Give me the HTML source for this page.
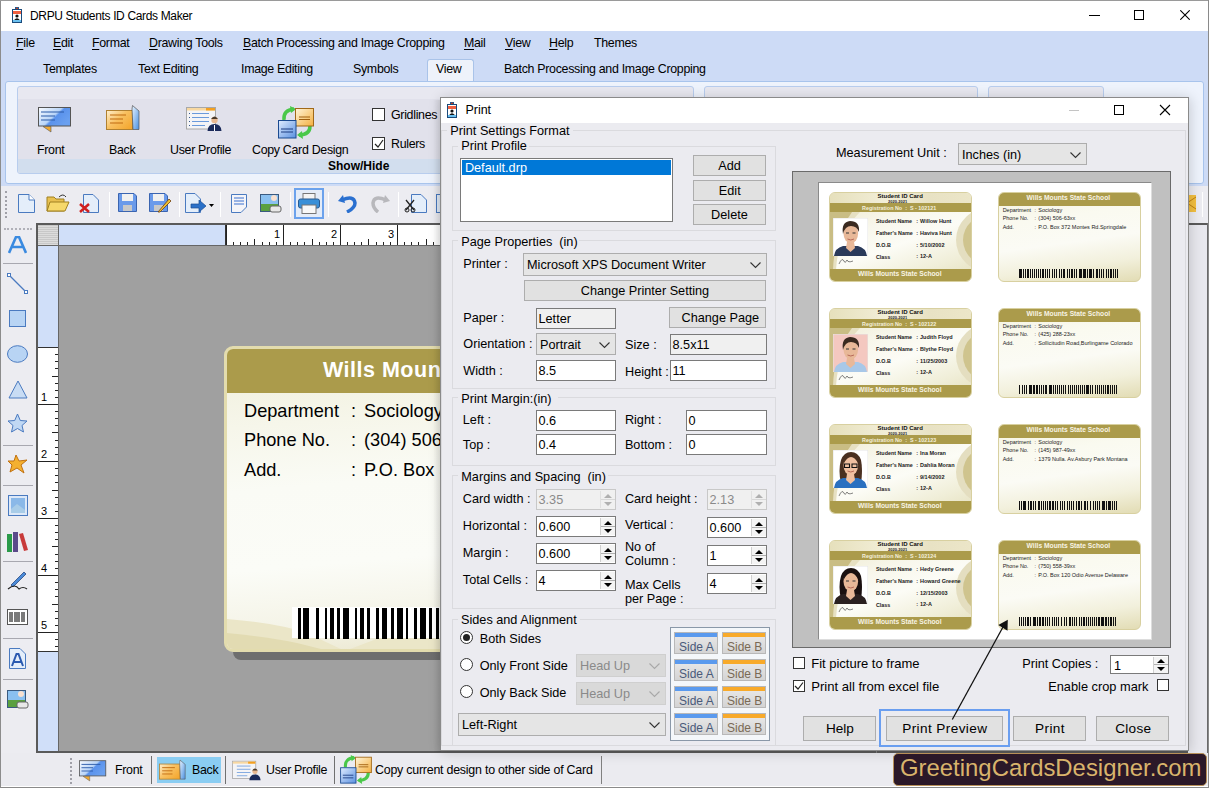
<!DOCTYPE html>
<html><head><meta charset="utf-8">
<style>
*{margin:0;padding:0;box-sizing:border-box}
html,body{width:1209px;height:788px;overflow:hidden;background:#ececf1;font-family:"Liberation Sans",sans-serif;font-size:12.4px;letter-spacing:-0.3px;color:#000}
.a{position:absolute}
.t{position:absolute;white-space:nowrap;line-height:1}
.u{text-decoration:underline;text-underline-offset:2px}
.sep{position:absolute;width:1px;background:#c8c8d0;border-right:1px solid #fff}
.hsep{position:absolute;height:1px;background:#a8a8b0}
</style></head><body>
<!-- ============ MAIN WINDOW ============ -->
<div class="a" style="left:0;top:0;width:1209px;height:31px;background:#fff"></div>
<div class="a" style="left:0;top:31px;width:1209px;height:155px;background:#cddbf6"></div>
<div class="a" style="left:0;top:0;width:1px;height:788px;background:#8c8c8c"></div>
<div class="a" style="left:0;top:0;width:1209px;height:1px;background:#9a9a9a"></div>
<!-- title -->
<svg class="a" style="left:12px;top:7px" width="10" height="16" viewBox="0 0 10 16"><rect x="3" y="0" width="4" height="3" fill="#2a5a90"/><rect x="4" y="0.8" width="2" height="1.5" fill="#c04020"/><rect x="0.5" y="2.5" width="9" height="13" fill="#fff" stroke="#1a4a7a"/><rect x="1" y="4" width="8" height="3" fill="#f06040"/><circle cx="5" cy="9" r="1.6" fill="#111"/><path d="M2.2 13 Q5 9.5 7.8 13Z" fill="#111"/><rect x="1" y="13" width="8" height="2" fill="#6ac0f0"/></svg>
<div class="t" style="left:30px;top:10px;font-size:12px;letter-spacing:-0.35px">DRPU Students ID Cards Maker</div>
<!-- window controls -->
<div class="a" style="left:1089px;top:15px;width:11px;height:1px;background:#000"></div>
<div class="a" style="left:1134px;top:10px;width:10px;height:10px;border:1px solid #000"></div>
<svg class="a" style="left:1180px;top:10px" width="10" height="10"><path d="M0.3 0.3L9.7 9.7M9.7 0.3L0.3 9.7" stroke="#000" stroke-width="1.1"/></svg>
<!-- menu -->
<div class="t" style="left:16px;top:37px"><span class="u">F</span>ile</div>
<div class="t" style="left:53px;top:37px"><span class="u">E</span>dit</div>
<div class="t" style="left:92px;top:37px"><span class="u">F</span>ormat</div>
<div class="t" style="left:149px;top:37px"><span class="u">D</span>rawing Tools</div>
<div class="t" style="left:243px;top:37px"><span class="u">B</span>atch Processing and Image Cropping</div>
<div class="t" style="left:464px;top:37px"><span class="u">M</span>ail</div>
<div class="t" style="left:505px;top:37px"><span class="u">V</span>iew</div>
<div class="t" style="left:549px;top:37px"><span class="u">H</span>elp</div>
<div class="t" style="left:594px;top:37px">Themes</div>
<!-- tabs -->
<div class="t" style="left:43px;top:63px">Templates</div>
<div class="t" style="left:138px;top:63px">Text Editing</div>
<div class="t" style="left:241px;top:63px">Image Editing</div>
<div class="t" style="left:353px;top:63px">Symbols</div>
<div class="a" style="left:427px;top:59px;width:47px;height:24px;background:#eef2fa;border:1px solid #a9c3e9;border-bottom:none;border-radius:3px 3px 0 0"></div>
<div class="t" style="left:436px;top:63px">View</div>
<div class="t" style="left:504px;top:63px">Batch Processing and Image Cropping</div>
<!-- ribbon -->
<div class="a" style="left:5px;top:81px;width:1199px;height:103px;background:#eef3fc;border:1px solid #a8c4ec;border-radius:3px"></div>
<div class="a" style="left:17px;top:86px;width:677px;height:88px;background:#e8e8f0;border:1px solid #b8cdee;border-radius:3px;overflow:hidden">
  <div class="a" style="left:0;top:12px;width:677px;height:60px;background:#e1e1eb"></div>
  <div class="a" style="left:0;top:72px;width:677px;height:15px;background:#d2deee"></div>
</div>
<div class="a" style="left:704px;top:86px;width:274px;height:88px;background:#e8e8f0;border:1px solid #b8cdee;border-radius:3px"></div>
<div class="a" style="left:988px;top:86px;width:116px;height:88px;background:#e8e8f0;border:1px solid #b8cdee;border-radius:3px"></div>
<!-- ribbon icons -->
<svg class="a" style="left:38px;top:107px" width="34" height="26" viewBox="0 0 34 26"><defs><linearGradient id="gf" x1="0" y1="0" x2="1" y2="0.6"><stop offset="0" stop-color="#fafcff"/><stop offset="0.55" stop-color="#b8d4f8"/><stop offset="0.62" stop-color="#5a92ec"/><stop offset="1" stop-color="#6aa0f0"/></linearGradient></defs><rect x="0.5" y="0.5" width="32" height="18.5" fill="url(#gf)" stroke="#555"/><path d="M3 5h23M3 9h14M3 13h14" stroke="#2a5aa8" stroke-width="1.1"/><path d="M5 19.5 L13 19.5 L13 25Z" fill="#f0a830" stroke="#555" stroke-width="0.6"/></svg>
<div class="t" style="left:37px;top:144px">Front</div>
<svg class="a" style="left:106px;top:105px" width="34" height="25" viewBox="0 0 34 25"><defs><linearGradient id="gb" x1="0" y1="0" x2="1" y2="0.8"><stop offset="0" stop-color="#fff0d0"/><stop offset="0.5" stop-color="#f8c060"/><stop offset="1" stop-color="#f4a830"/></linearGradient><linearGradient id="gb2" x1="0" y1="0" x2="1" y2="1"><stop offset="0" stop-color="#e8f4ff"/><stop offset="1" stop-color="#4a90e0"/></linearGradient></defs><rect x="0.5" y="5.5" width="26" height="19" fill="url(#gb)" stroke="#b08030"/><path d="M4 10h16M4 14h13M4 18h13" stroke="#c06a10" stroke-width="1.1"/><path d="M26 4 L26.5 0.5 L33 6 L33 24.5 L27 24.5Z" fill="url(#gb2)" stroke="#555" stroke-width="0.7"/></svg>
<div class="t" style="left:109px;top:144px">Back</div>
<svg class="a" style="left:186px;top:107px" width="36" height="24" viewBox="0 0 36 24"><rect x="0.5" y="0.5" width="29" height="21.5" fill="#f4f4f6" stroke="#a8a8a8"/><rect x="1" y="1" width="28" height="2.5" fill="#f8d8a0"/><rect x="20" y="1" width="9" height="2.5" fill="#f4a020"/><path d="M6 6.5h17M6 10.5h17M6 14.5h17M6 18.5h13" stroke="#5a90d8" stroke-width="0.9"/><path d="M3 6.5h1M3 10.5h1M3 14.5h1M3 18.5h1" stroke="#3a5a90"/><circle cx="28.5" cy="13" r="3.2" fill="#e8b890"/><path d="M25 12 Q28.5 7 32 12" fill="#4a3a2a"/><path d="M21.5 24 Q22 17 28.5 17 Q35 17 35.5 24Z" fill="#1a2a5a"/><path d="M28 18h1v6h-1Z" fill="#fff"/></svg>
<div class="t" style="left:170px;top:144px">User Profile</div>
<svg class="a" style="left:277px;top:106px" width="38" height="33" viewBox="0 0 38 33"><defs><linearGradient id="go" x1="0" y1="0" x2="1" y2="1"><stop offset="0" stop-color="#fff4d8"/><stop offset="1" stop-color="#f4b040"/></linearGradient><linearGradient id="gl" x1="0" y1="0" x2="1" y2="1"><stop offset="0" stop-color="#e0ecff"/><stop offset="1" stop-color="#5a90e0"/></linearGradient></defs><path d="M7 14 Q6 4 17 3" stroke="#4ac84a" stroke-width="3.5" fill="none"/><path d="M13 0L19 3L14 7Z" fill="#4ac84a"/><path d="M22 29 Q33 29 33 20" stroke="#4ac84a" stroke-width="3.5" fill="none"/><path d="M26 33L20 29L25 25Z" fill="#4ac84a"/><rect x="18.5" y="2.5" width="18" height="17.5" fill="url(#go)" stroke="#a06818"/><path d="M22 11h11M22 13.5h11" stroke="#a06010" stroke-width="1"/><rect x="1.5" y="14.5" width="17.5" height="17.5" fill="url(#gl)" stroke="#1a4a90"/><path d="M4 23h12M4 26h12" stroke="#1a3a80" stroke-width="1"/></svg>
<div class="t" style="left:252px;top:144px">Copy Card Design</div>
<div class="a" style="left:372px;top:108px;width:13px;height:13px;background:#fff;border:1px solid #333"></div>
<div class="t" style="left:391px;top:109px">Gridlines</div>
<div class="a" style="left:372px;top:137px;width:13px;height:13px;background:#fff;border:1px solid #333"></div>
<svg class="a" style="left:374px;top:139px" width="10" height="10"><path d="M1 5 L4 8 L9 1" stroke="#222" stroke-width="1.2" fill="none"/></svg>
<div class="t" style="left:391px;top:138px">Rulers</div>
<div class="t" style="left:328px;top:160px;font-weight:bold;font-size:12px;letter-spacing:0">Show/Hide</div>
<!-- toolbar -->
<div class="a" style="left:1px;top:184px;width:1208px;height:2px;background:#cddbf6"></div>
<div class="a" style="left:1px;top:186px;width:1208px;height:37px;background:#ececf1"></div>
<div class="a" style="left:5px;top:191px;width:1px;height:27px;border-left:2px dotted #a0a0a8"></div>
<!-- new -->
<svg class="a" style="left:18px;top:194px" width="17" height="19" viewBox="0 0 17 19"><path d="M0.5 0.5H11L16.5 6V18.5H0.5Z" fill="#e4eefa" stroke="#4a7ac0"/><path d="M11 0.5V6H16.5" fill="#fff" stroke="#4a7ac0"/></svg>
<!-- open -->
<svg class="a" style="left:46px;top:193px" width="24" height="19" viewBox="0 0 24 19"><path d="M1 4H8L10 6H18V18H1Z" fill="#e8c050" stroke="#a08020"/><path d="M4 9H23L19 18H1Z" fill="#f6d86a" stroke="#a08020"/><path d="M13 4 Q17 0 20 4" stroke="#333" fill="none"/></svg>
<!-- close -->
<svg class="a" style="left:79px;top:194px" width="21" height="19" viewBox="0 0 21 19"><path d="M4.5 0.5H14L19.5 6V18.5H4.5Z" fill="#e4eefa" stroke="#4a7ac0"/><path d="M1 10L10 18M10 10L1 18" stroke="#d02020" stroke-width="2.5"/></svg>
<div class="sep" style="left:109px;top:192px;height:25px"></div>
<!-- save -->
<svg class="a" style="left:118px;top:193px" width="19" height="19" viewBox="0 0 19 19"><path d="M0.5 0.5H16L18.5 3V18.5H0.5Z" fill="#6a9aea" stroke="#3a64b0"/><rect x="4" y="1" width="11" height="7" fill="#f0f0f0"/><rect x="5" y="12" width="9" height="6" fill="#c8c8c8"/></svg>
<!-- save as -->
<svg class="a" style="left:149px;top:193px" width="23" height="20" viewBox="0 0 23 20"><path d="M0.5 0.5H16L18.5 3V18.5H0.5Z" fill="#6a9aea" stroke="#3a64b0"/><rect x="4" y="1" width="11" height="7" fill="#f0f0f0"/><rect x="5" y="12" width="9" height="6" fill="#c8c8c8"/><path d="M9 19L20 6L22 8L11 19Z" fill="#f0c030" stroke="#704010" stroke-width="0.8"/></svg>
<div class="sep" style="left:179px;top:192px;height:25px"></div>
<!-- export -->
<svg class="a" style="left:185px;top:193px" width="30" height="20" viewBox="0 0 30 20"><path d="M0.5 0.5H10L15.5 6V19.5H0.5Z" fill="#e4eefa" stroke="#4a7ac0"/><path d="M6 11H14V7L21 13L14 19V15H6Z" fill="#2a70c8" stroke="#1a4a90" stroke-width="0.7"/><path d="M24 11H29L26.5 14Z" fill="#000"/></svg>
<div class="sep" style="left:220px;top:192px;height:25px"></div>
<svg class="a" style="left:231px;top:194px" width="16" height="19" viewBox="0 0 16 19"><path d="M0.5 0.5H15.5V13L10 18.5H0.5Z" fill="#f4f4f8" stroke="#4a7ac0"/><path d="M3 4H13M3 7H13M3 10H13" stroke="#3a70d0" stroke-width="1.2"/></svg>
<svg class="a" style="left:260px;top:194px" width="22" height="19" viewBox="0 0 22 19"><rect x="0.5" y="0.5" width="18" height="17" fill="#8ac0f0" stroke="#3a5a80"/><rect x="1" y="10" width="17" height="7" fill="#5aa040"/><circle cx="14" cy="4" r="3" fill="#f8e0d0"/><rect x="10" y="12" width="11" height="6" rx="2" fill="#e8e8e8" stroke="#666"/></svg>
<div class="sep" style="left:290px;top:192px;height:25px"></div>
<div class="a" style="left:294px;top:188px;width:30px;height:31px;border:2px solid #6ca2ec;background:#e4ecf8"></div>
<svg class="a" style="left:298px;top:193px" width="22" height="21" viewBox="0 0 22 21"><rect x="5" y="0.5" width="12" height="6" fill="#f4f4f4" stroke="#777"/><rect x="0.5" y="6" width="21" height="9" rx="2" fill="#3a90d8" stroke="#2a5a90"/><rect x="4" y="12" width="14" height="8.5" fill="#f8f8f8" stroke="#777"/></svg>
<div class="sep" style="left:328px;top:192px;height:25px"></div>
<svg class="a" style="left:338px;top:194px" width="19" height="19" viewBox="0 0 19 19"><path d="M5 1L0 7L7 9Z" fill="#2a70d0"/><path d="M4 6 Q16 1 17 9 Q17 14 9 18" stroke="#2a70d0" stroke-width="3.5" fill="none"/></svg>
<svg class="a" style="left:371px;top:194px" width="19" height="19" viewBox="0 0 19 19"><path d="M14 1L19 7L12 9Z" fill="#b8b8bc"/><path d="M15 6 Q3 1 2 9 Q2 14 7 18" stroke="#b8b8bc" stroke-width="3.5" fill="none"/></svg>
<div class="sep" style="left:398px;top:192px;height:25px"></div>
<svg class="a" style="left:404px;top:194px" width="24" height="19" viewBox="0 0 24 19"><path d="M7.5 0.5H17L22.5 6V18.5H7.5Z" fill="#e4eefa" stroke="#4a7ac0"/><path d="M2 6L10 16M10 6L2 16" stroke="#222" stroke-width="1.3"/><circle cx="3" cy="16" r="2" fill="none" stroke="#222"/><circle cx="9" cy="16" r="2" fill="none" stroke="#222"/></svg>
<svg class="a" style="left:436px;top:194px" width="6" height="19"><rect x="0.5" y="0.5" width="10" height="18" fill="#e4eefa" stroke="#4a7ac0"/></svg>
<!-- far right -->
<svg class="a" style="left:1186px;top:195px" width="10" height="17"><path d="M0 0H10V17H0Z" fill="#f4c040"/><path d="M10 2L1 8L10 14" stroke="#c08010" fill="none"/></svg>
<div class="sep" style="left:1202px;top:192px;height:25px"></div>

<!-- left toolbox -->
<div class="a" style="left:1px;top:223px;width:35px;height:529px;background:#ececf1"></div>
<div class="a" style="left:4px;top:228px;width:28px;height:1px;border-top:2px dotted #b0b0b8"></div>
<svg class="a" style="left:8px;top:236px" width="19" height="18" viewBox="0 0 19 18"><path d="M1 17L8 1H11L18 17M4.5 11H14.5" stroke="#3a8ae0" stroke-width="2.6" fill="none"/></svg>
<div class="hsep" style="left:3px;top:263px;width:30px"></div>
<svg class="a" style="left:7px;top:273px" width="21" height="21"><path d="M2 2L19 19" stroke="#4a7ac0" stroke-width="1.3"/><rect x="0.5" y="0.5" width="3" height="3" fill="#fff" stroke="#4a7ac0"/><rect x="17.5" y="17.5" width="3" height="3" fill="#fff" stroke="#4a7ac0"/></svg>
<svg class="a" style="left:9px;top:310px" width="17" height="17"><rect x="0.5" y="0.5" width="16" height="16" fill="#b8d4f4" stroke="#4a7ac0"/></svg>
<svg class="a" style="left:7px;top:345px" width="21" height="18"><ellipse cx="10.5" cy="9" rx="10" ry="8.3" fill="#b8d4f4" stroke="#4a7ac0"/></svg>
<svg class="a" style="left:8px;top:380px" width="20" height="19"><path d="M10 1L19 18H1Z" fill="#c8dcf4" stroke="#4a7ac0"/></svg>
<svg class="a" style="left:7px;top:413px" width="21" height="20"><path d="M10.5 1L13.3 7.5L20 8L15 12.5L16.5 19L10.5 15.5L4.5 19L6 12.5L1 8L7.7 7.5Z" fill="#c0d8f4" stroke="#4a7ac0"/></svg>
<div class="hsep" style="left:3px;top:445px;width:30px"></div>
<svg class="a" style="left:7px;top:454px" width="21" height="20"><path d="M9 1L12 7L20 6L14 11L17 19L10 14L3 18L5 11L1 7L7 7Z" fill="#f4b030" stroke="#c07010"/></svg>
<div class="hsep" style="left:3px;top:485px;width:30px"></div>
<svg class="a" style="left:8px;top:495px" width="20" height="21"><rect x="0.5" y="0.5" width="19" height="20" fill="#dce8f8" stroke="#4a7ac0"/><rect x="3" y="3" width="14" height="15" fill="#8ab8e8"/><path d="M3 14L9 9L17 15V18H3Z" fill="#a8cce8"/></svg>
<svg class="a" style="left:6px;top:532px" width="23" height="20"><rect x="1" y="2" width="5" height="18" fill="#2a9a4a"/><rect x="7" y="0" width="5" height="20" fill="#5a4a8a"/><path d="M13 2L17 1L22 18L18 19Z" fill="#c83a3a"/></svg>
<div class="hsep" style="left:3px;top:561px;width:30px"></div>
<svg class="a" style="left:7px;top:570px" width="21" height="21"><path d="M4 15L17 2L19 4L6 17Z" fill="#4a8ad8" stroke="#2a4a80" stroke-width="0.8"/><path d="M1 19 Q8 13 12 19 Q16 16 20 19" stroke="#222" fill="none" stroke-width="1.2"/></svg>
<svg class="a" style="left:7px;top:609px" width="21" height="16"><rect x="0.5" y="0.5" width="20" height="15" fill="#fff" stroke="#555"/><path d="M3 3V13M5 3V13M8 3V13M10 3V13M12 3V13M15 3V13M17 3V13" stroke="#222" stroke-width="1.2"/></svg>
<div class="hsep" style="left:3px;top:638px;width:30px"></div>
<svg class="a" style="left:9px;top:648px" width="17" height="21"><path d="M0.5 0.5H11L16.5 6V20.5H0.5Z" fill="#e4eefa" stroke="#4a7ac0"/><path d="M3 18L7.5 6H9.5L14 18M5 14H12" stroke="#2a5ab0" stroke-width="2" fill="none"/></svg>
<div class="hsep" style="left:3px;top:679px;width:30px"></div>
<svg class="a" style="left:7px;top:690px" width="22" height="19" viewBox="0 0 22 19"><rect x="0.5" y="0.5" width="18" height="17" fill="#8ac0f0" stroke="#3a5a80"/><rect x="1" y="10" width="17" height="7" fill="#5aa040"/><circle cx="14" cy="4" r="3" fill="#f8e0d0"/><rect x="10" y="12" width="11" height="6" rx="2" fill="#e8e8e8" stroke="#666"/></svg>

<!-- canvas -->
<div class="a" style="left:36px;top:223px;width:1152px;height:530px;background:#a0a0a0;border:2px solid #5a5a5a;border-right:none"></div>
<div class="a" style="left:1188px;top:223px;width:21px;height:530px;background:#e8e8ee;border-top:2px solid #5a5a5a"></div>
<div class="a" style="left:1207px;top:223px;width:2px;height:530px;background:#6a6a6a"></div>
<!-- rulers -->
<div class="a" style="left:38px;top:225px;width:21px;height:21px;background:repeating-linear-gradient(#c8c8c8 0 1px,#dcdcdc 1px 2px);border-right:1px solid #666;border-bottom:1px solid #666"></div>
<div class="a" style="left:59px;top:225px;width:1129px;height:21px;background:#d0dff9;border-bottom:1px solid #666"></div>
<div class="a" style="left:225px;top:225px;width:963px;height:20px;background:#fff;border-left:1px solid #333"></div>
<div class="a" style="left:38px;top:246px;width:21px;height:505px;background:#d0dff9;border-right:1px solid #666"></div>
<div class="a" style="left:38px;top:347px;width:20px;height:305px;background:#fff;border-top:1px solid #333;border-bottom:1px solid #333"></div>
<div class="a" style="left:226px;top:225px;width:1px;height:20px;background:#222"></div>
<div class="a" style="left:233px;top:242px;width:1px;height:3px;background:#222"></div>
<div class="a" style="left:240px;top:242px;width:1px;height:3px;background:#222"></div>
<div class="a" style="left:247px;top:242px;width:1px;height:3px;background:#222"></div>
<div class="a" style="left:254px;top:239px;width:1px;height:6px;background:#222"></div>
<div class="a" style="left:262px;top:242px;width:1px;height:3px;background:#222"></div>
<div class="a" style="left:269px;top:242px;width:1px;height:3px;background:#222"></div>
<div class="a" style="left:276px;top:242px;width:1px;height:3px;background:#222"></div>
<div class="a" style="left:283px;top:225px;width:1px;height:20px;background:#222"></div>
<div class="a" style="left:290px;top:242px;width:1px;height:3px;background:#222"></div>
<div class="a" style="left:297px;top:242px;width:1px;height:3px;background:#222"></div>
<div class="a" style="left:304px;top:242px;width:1px;height:3px;background:#222"></div>
<div class="a" style="left:312px;top:239px;width:1px;height:6px;background:#222"></div>
<div class="a" style="left:319px;top:242px;width:1px;height:3px;background:#222"></div>
<div class="a" style="left:326px;top:242px;width:1px;height:3px;background:#222"></div>
<div class="a" style="left:333px;top:242px;width:1px;height:3px;background:#222"></div>
<div class="t" style="left:274px;top:229px;font-size:11px">1</div>
<div class="a" style="left:340px;top:225px;width:1px;height:20px;background:#222"></div>
<div class="a" style="left:347px;top:242px;width:1px;height:3px;background:#222"></div>
<div class="a" style="left:354px;top:242px;width:1px;height:3px;background:#222"></div>
<div class="a" style="left:361px;top:242px;width:1px;height:3px;background:#222"></div>
<div class="a" style="left:368px;top:239px;width:1px;height:6px;background:#222"></div>
<div class="a" style="left:376px;top:242px;width:1px;height:3px;background:#222"></div>
<div class="a" style="left:383px;top:242px;width:1px;height:3px;background:#222"></div>
<div class="a" style="left:390px;top:242px;width:1px;height:3px;background:#222"></div>
<div class="t" style="left:331px;top:229px;font-size:11px">2</div>
<div class="a" style="left:397px;top:225px;width:1px;height:20px;background:#222"></div>
<div class="a" style="left:404px;top:242px;width:1px;height:3px;background:#222"></div>
<div class="a" style="left:411px;top:242px;width:1px;height:3px;background:#222"></div>
<div class="a" style="left:418px;top:242px;width:1px;height:3px;background:#222"></div>
<div class="a" style="left:426px;top:239px;width:1px;height:6px;background:#222"></div>
<div class="a" style="left:433px;top:242px;width:1px;height:3px;background:#222"></div>
<div class="a" style="left:440px;top:242px;width:1px;height:3px;background:#222"></div>
<div class="a" style="left:447px;top:242px;width:1px;height:3px;background:#222"></div>
<div class="t" style="left:388px;top:229px;font-size:11px">3</div>
<div class="a" style="left:454px;top:225px;width:1px;height:20px;background:#222"></div>
<div class="a" style="left:461px;top:242px;width:1px;height:3px;background:#222"></div>
<div class="a" style="left:468px;top:242px;width:1px;height:3px;background:#222"></div>
<div class="a" style="left:475px;top:242px;width:1px;height:3px;background:#222"></div>
<div class="a" style="left:482px;top:239px;width:1px;height:6px;background:#222"></div>
<div class="a" style="left:490px;top:242px;width:1px;height:3px;background:#222"></div>
<div class="a" style="left:497px;top:242px;width:1px;height:3px;background:#222"></div>
<div class="a" style="left:504px;top:242px;width:1px;height:3px;background:#222"></div>
<div class="t" style="left:445px;top:229px;font-size:11px">4</div>
<div class="a" style="left:511px;top:225px;width:1px;height:20px;background:#222"></div>
<div class="a" style="left:518px;top:242px;width:1px;height:3px;background:#222"></div>
<div class="a" style="left:525px;top:242px;width:1px;height:3px;background:#222"></div>
<div class="a" style="left:532px;top:242px;width:1px;height:3px;background:#222"></div>
<div class="a" style="left:540px;top:239px;width:1px;height:6px;background:#222"></div>
<div class="a" style="left:547px;top:242px;width:1px;height:3px;background:#222"></div>
<div class="a" style="left:554px;top:242px;width:1px;height:3px;background:#222"></div>
<div class="a" style="left:561px;top:242px;width:1px;height:3px;background:#222"></div>
<div class="t" style="left:502px;top:229px;font-size:11px">5</div>
<div class="a" style="left:568px;top:225px;width:1px;height:20px;background:#222"></div>
<div class="a" style="left:575px;top:242px;width:1px;height:3px;background:#222"></div>
<div class="a" style="left:582px;top:242px;width:1px;height:3px;background:#222"></div>
<div class="a" style="left:589px;top:242px;width:1px;height:3px;background:#222"></div>
<div class="a" style="left:596px;top:239px;width:1px;height:6px;background:#222"></div>
<div class="a" style="left:604px;top:242px;width:1px;height:3px;background:#222"></div>
<div class="a" style="left:611px;top:242px;width:1px;height:3px;background:#222"></div>
<div class="a" style="left:618px;top:242px;width:1px;height:3px;background:#222"></div>
<div class="t" style="left:559px;top:229px;font-size:11px">6</div>
<div class="a" style="left:625px;top:225px;width:1px;height:20px;background:#222"></div>
<div class="a" style="left:632px;top:242px;width:1px;height:3px;background:#222"></div>
<div class="a" style="left:639px;top:242px;width:1px;height:3px;background:#222"></div>
<div class="a" style="left:646px;top:242px;width:1px;height:3px;background:#222"></div>
<div class="a" style="left:654px;top:239px;width:1px;height:6px;background:#222"></div>
<div class="a" style="left:661px;top:242px;width:1px;height:3px;background:#222"></div>
<div class="a" style="left:668px;top:242px;width:1px;height:3px;background:#222"></div>
<div class="a" style="left:675px;top:242px;width:1px;height:3px;background:#222"></div>
<div class="t" style="left:616px;top:229px;font-size:11px">7</div>
<div class="a" style="left:682px;top:225px;width:1px;height:20px;background:#222"></div>
<div class="a" style="left:689px;top:242px;width:1px;height:3px;background:#222"></div>
<div class="a" style="left:696px;top:242px;width:1px;height:3px;background:#222"></div>
<div class="a" style="left:703px;top:242px;width:1px;height:3px;background:#222"></div>
<div class="a" style="left:710px;top:239px;width:1px;height:6px;background:#222"></div>
<div class="a" style="left:718px;top:242px;width:1px;height:3px;background:#222"></div>
<div class="a" style="left:725px;top:242px;width:1px;height:3px;background:#222"></div>
<div class="a" style="left:732px;top:242px;width:1px;height:3px;background:#222"></div>
<div class="t" style="left:673px;top:229px;font-size:11px">8</div>
<div class="a" style="left:739px;top:225px;width:1px;height:20px;background:#222"></div>
<div class="a" style="left:746px;top:242px;width:1px;height:3px;background:#222"></div>
<div class="a" style="left:753px;top:242px;width:1px;height:3px;background:#222"></div>
<div class="a" style="left:760px;top:242px;width:1px;height:3px;background:#222"></div>
<div class="a" style="left:768px;top:239px;width:1px;height:6px;background:#222"></div>
<div class="a" style="left:775px;top:242px;width:1px;height:3px;background:#222"></div>
<div class="a" style="left:782px;top:242px;width:1px;height:3px;background:#222"></div>
<div class="a" style="left:789px;top:242px;width:1px;height:3px;background:#222"></div>
<div class="t" style="left:730px;top:229px;font-size:11px">9</div>
<div class="a" style="left:796px;top:225px;width:1px;height:20px;background:#222"></div>
<div class="a" style="left:803px;top:242px;width:1px;height:3px;background:#222"></div>
<div class="a" style="left:810px;top:242px;width:1px;height:3px;background:#222"></div>
<div class="a" style="left:817px;top:242px;width:1px;height:3px;background:#222"></div>
<div class="a" style="left:824px;top:239px;width:1px;height:6px;background:#222"></div>
<div class="a" style="left:832px;top:242px;width:1px;height:3px;background:#222"></div>
<div class="a" style="left:839px;top:242px;width:1px;height:3px;background:#222"></div>
<div class="a" style="left:846px;top:242px;width:1px;height:3px;background:#222"></div>
<div class="t" style="left:787px;top:229px;font-size:11px">10</div>
<div class="a" style="left:853px;top:225px;width:1px;height:20px;background:#222"></div>
<div class="a" style="left:860px;top:242px;width:1px;height:3px;background:#222"></div>
<div class="a" style="left:867px;top:242px;width:1px;height:3px;background:#222"></div>
<div class="a" style="left:874px;top:242px;width:1px;height:3px;background:#222"></div>
<div class="a" style="left:882px;top:239px;width:1px;height:6px;background:#222"></div>
<div class="a" style="left:889px;top:242px;width:1px;height:3px;background:#222"></div>
<div class="a" style="left:896px;top:242px;width:1px;height:3px;background:#222"></div>
<div class="a" style="left:903px;top:242px;width:1px;height:3px;background:#222"></div>
<div class="t" style="left:844px;top:229px;font-size:11px">11</div>
<div class="a" style="left:910px;top:225px;width:1px;height:20px;background:#222"></div>
<div class="a" style="left:917px;top:242px;width:1px;height:3px;background:#222"></div>
<div class="a" style="left:924px;top:242px;width:1px;height:3px;background:#222"></div>
<div class="a" style="left:931px;top:242px;width:1px;height:3px;background:#222"></div>
<div class="a" style="left:938px;top:239px;width:1px;height:6px;background:#222"></div>
<div class="a" style="left:946px;top:242px;width:1px;height:3px;background:#222"></div>
<div class="a" style="left:953px;top:242px;width:1px;height:3px;background:#222"></div>
<div class="a" style="left:960px;top:242px;width:1px;height:3px;background:#222"></div>
<div class="t" style="left:901px;top:229px;font-size:11px">12</div>
<div class="a" style="left:967px;top:225px;width:1px;height:20px;background:#222"></div>
<div class="a" style="left:974px;top:242px;width:1px;height:3px;background:#222"></div>
<div class="a" style="left:981px;top:242px;width:1px;height:3px;background:#222"></div>
<div class="a" style="left:988px;top:242px;width:1px;height:3px;background:#222"></div>
<div class="a" style="left:996px;top:239px;width:1px;height:6px;background:#222"></div>
<div class="a" style="left:1003px;top:242px;width:1px;height:3px;background:#222"></div>
<div class="a" style="left:1010px;top:242px;width:1px;height:3px;background:#222"></div>
<div class="a" style="left:1017px;top:242px;width:1px;height:3px;background:#222"></div>
<div class="t" style="left:958px;top:229px;font-size:11px">13</div>
<div class="a" style="left:1024px;top:225px;width:1px;height:20px;background:#222"></div>
<div class="a" style="left:1031px;top:242px;width:1px;height:3px;background:#222"></div>
<div class="a" style="left:1038px;top:242px;width:1px;height:3px;background:#222"></div>
<div class="a" style="left:1045px;top:242px;width:1px;height:3px;background:#222"></div>
<div class="a" style="left:1052px;top:239px;width:1px;height:6px;background:#222"></div>
<div class="a" style="left:1060px;top:242px;width:1px;height:3px;background:#222"></div>
<div class="a" style="left:1067px;top:242px;width:1px;height:3px;background:#222"></div>
<div class="a" style="left:1074px;top:242px;width:1px;height:3px;background:#222"></div>
<div class="t" style="left:1015px;top:229px;font-size:11px">14</div>
<div class="a" style="left:1081px;top:225px;width:1px;height:20px;background:#222"></div>
<div class="a" style="left:1088px;top:242px;width:1px;height:3px;background:#222"></div>
<div class="a" style="left:1095px;top:242px;width:1px;height:3px;background:#222"></div>
<div class="a" style="left:1102px;top:242px;width:1px;height:3px;background:#222"></div>
<div class="a" style="left:1110px;top:239px;width:1px;height:6px;background:#222"></div>
<div class="a" style="left:1117px;top:242px;width:1px;height:3px;background:#222"></div>
<div class="a" style="left:1124px;top:242px;width:1px;height:3px;background:#222"></div>
<div class="a" style="left:1131px;top:242px;width:1px;height:3px;background:#222"></div>
<div class="t" style="left:1072px;top:229px;font-size:11px">15</div>
<div class="a" style="left:1138px;top:225px;width:1px;height:20px;background:#222"></div>
<div class="a" style="left:1145px;top:242px;width:1px;height:3px;background:#222"></div>
<div class="a" style="left:1152px;top:242px;width:1px;height:3px;background:#222"></div>
<div class="a" style="left:1159px;top:242px;width:1px;height:3px;background:#222"></div>
<div class="a" style="left:1166px;top:239px;width:1px;height:6px;background:#222"></div>
<div class="a" style="left:1174px;top:242px;width:1px;height:3px;background:#222"></div>
<div class="a" style="left:1181px;top:242px;width:1px;height:3px;background:#222"></div>
<div class="a" style="left:1188px;top:242px;width:1px;height:3px;background:#222"></div>
<div class="t" style="left:1129px;top:229px;font-size:11px">16</div>
<div class="a" style="left:55px;top:354px;width:3px;height:1px;background:#222"></div>
<div class="a" style="left:55px;top:361px;width:3px;height:1px;background:#222"></div>
<div class="a" style="left:55px;top:368px;width:3px;height:1px;background:#222"></div>
<div class="a" style="left:52px;top:376px;width:6px;height:1px;background:#222"></div>
<div class="a" style="left:55px;top:383px;width:3px;height:1px;background:#222"></div>
<div class="a" style="left:55px;top:390px;width:3px;height:1px;background:#222"></div>
<div class="a" style="left:55px;top:397px;width:3px;height:1px;background:#222"></div>
<div class="a" style="left:38px;top:404px;width:20px;height:1px;background:#222"></div>
<div class="a" style="left:55px;top:411px;width:3px;height:1px;background:#222"></div>
<div class="a" style="left:55px;top:418px;width:3px;height:1px;background:#222"></div>
<div class="a" style="left:55px;top:425px;width:3px;height:1px;background:#222"></div>
<div class="a" style="left:52px;top:432px;width:6px;height:1px;background:#222"></div>
<div class="a" style="left:55px;top:440px;width:3px;height:1px;background:#222"></div>
<div class="a" style="left:55px;top:447px;width:3px;height:1px;background:#222"></div>
<div class="a" style="left:55px;top:454px;width:3px;height:1px;background:#222"></div>
<div class="t" style="left:41px;top:392px;font-size:11px">1</div>
<div class="a" style="left:38px;top:461px;width:20px;height:1px;background:#222"></div>
<div class="a" style="left:55px;top:468px;width:3px;height:1px;background:#222"></div>
<div class="a" style="left:55px;top:475px;width:3px;height:1px;background:#222"></div>
<div class="a" style="left:55px;top:482px;width:3px;height:1px;background:#222"></div>
<div class="a" style="left:52px;top:490px;width:6px;height:1px;background:#222"></div>
<div class="a" style="left:55px;top:497px;width:3px;height:1px;background:#222"></div>
<div class="a" style="left:55px;top:504px;width:3px;height:1px;background:#222"></div>
<div class="a" style="left:55px;top:511px;width:3px;height:1px;background:#222"></div>
<div class="t" style="left:41px;top:449px;font-size:11px">2</div>
<div class="a" style="left:38px;top:518px;width:20px;height:1px;background:#222"></div>
<div class="a" style="left:55px;top:525px;width:3px;height:1px;background:#222"></div>
<div class="a" style="left:55px;top:532px;width:3px;height:1px;background:#222"></div>
<div class="a" style="left:55px;top:539px;width:3px;height:1px;background:#222"></div>
<div class="a" style="left:52px;top:546px;width:6px;height:1px;background:#222"></div>
<div class="a" style="left:55px;top:554px;width:3px;height:1px;background:#222"></div>
<div class="a" style="left:55px;top:561px;width:3px;height:1px;background:#222"></div>
<div class="a" style="left:55px;top:568px;width:3px;height:1px;background:#222"></div>
<div class="t" style="left:41px;top:506px;font-size:11px">3</div>
<div class="a" style="left:38px;top:575px;width:20px;height:1px;background:#222"></div>
<div class="a" style="left:55px;top:582px;width:3px;height:1px;background:#222"></div>
<div class="a" style="left:55px;top:589px;width:3px;height:1px;background:#222"></div>
<div class="a" style="left:55px;top:596px;width:3px;height:1px;background:#222"></div>
<div class="a" style="left:52px;top:604px;width:6px;height:1px;background:#222"></div>
<div class="a" style="left:55px;top:611px;width:3px;height:1px;background:#222"></div>
<div class="a" style="left:55px;top:618px;width:3px;height:1px;background:#222"></div>
<div class="a" style="left:55px;top:625px;width:3px;height:1px;background:#222"></div>
<div class="t" style="left:41px;top:563px;font-size:11px">4</div>
<div class="a" style="left:38px;top:632px;width:20px;height:1px;background:#222"></div>
<div class="a" style="left:55px;top:639px;width:3px;height:1px;background:#222"></div>
<div class="a" style="left:55px;top:646px;width:3px;height:1px;background:#222"></div>
<div class="t" style="left:41px;top:620px;font-size:11px">5</div>
<!-- card on canvas -->
<div class="a" style="left:233px;top:358px;width:220px;height:302px;background:#6e6e6e;border-radius:8px"></div>
<div class="a" style="left:224px;top:346px;width:230px;height:306px;background:linear-gradient(175deg,#efeedb 0%,#f6f6ea 25%,#fafbf5 45%,#fbfcf7 70%,#f4f3e6 90%,#ece8d0 100%);border:3px solid #e3dcae;border-radius:9px;overflow:hidden">
  <div class="a" style="left:0;top:0;width:230px;height:44px;background:#ab9b4b"></div>
  <svg class="a" style="left:0;top:240px" width="230" height="66"><path d="M0 30 Q50 34 80 44 L118 62 L160 46 Q200 36 230 34 V66 H0Z" fill="#ebe6c8"/><path d="M0 44 Q40 48 70 54 L118 66 L0 66Z" fill="#e2dbb2"/></svg>
  <div class="a" style="left:65px;top:258px;width:170px;height:31px;background:#fff"></div>
</div>
<div class="t" style="left:323px;top:360px;font-size:21.5px;font-weight:bold;color:#fff;letter-spacing:0.5px">Wills Mounts State School</div>
<div class="t" style="left:244px;top:402px;font-size:18.2px;letter-spacing:0">Department</div>
<div class="t" style="left:351px;top:402px;font-size:18.2px;letter-spacing:0">:</div>
<div class="t" style="left:364px;top:402px;font-size:18.2px;letter-spacing:0">Sociology</div>
<div class="t" style="left:244px;top:431px;font-size:18.2px;letter-spacing:0">Phone No.</div>
<div class="t" style="left:351px;top:431px;font-size:18.2px;letter-spacing:0">:</div>
<div class="t" style="left:364px;top:431px;font-size:18.2px;letter-spacing:0">(304) 506-63xx</div>
<div class="t" style="left:244px;top:461px;font-size:18.2px;letter-spacing:0">Add.</div>
<div class="t" style="left:351px;top:461px;font-size:18.2px;letter-spacing:0">:</div>
<div class="t" style="left:364px;top:461px;font-size:18.2px;letter-spacing:0">P.O. Box 372</div>
<div class="a" style="left:298px;top:608px;width:2.5px;height:31px;background:#000"></div>
<div class="a" style="left:303.3px;top:608px;width:6px;height:31px;background:#000"></div>
<div class="a" style="left:316px;top:608px;width:2.6px;height:31px;background:#000"></div>
<div class="a" style="left:325px;top:608px;width:2.4px;height:31px;background:#000"></div>
<div class="a" style="left:330.3px;top:608px;width:3.4px;height:31px;background:#000"></div>
<div class="a" style="left:337px;top:608px;width:2.5px;height:31px;background:#000"></div>
<div class="a" style="left:342.5px;top:608px;width:6px;height:31px;background:#000"></div>
<div class="a" style="left:354.7px;top:608px;width:2.6px;height:31px;background:#000"></div>
<div class="a" style="left:360.1px;top:608px;width:3.5px;height:31px;background:#000"></div>
<div class="a" style="left:366.5px;top:608px;width:3px;height:31px;background:#000"></div>
<div class="a" style="left:376px;top:608px;width:2.6px;height:31px;background:#000"></div>
<div class="a" style="left:381.6px;top:608px;width:5.8px;height:31px;background:#000"></div>
<div class="a" style="left:390.7px;top:608px;width:3px;height:31px;background:#000"></div>
<div class="a" style="left:396.5px;top:608px;width:6px;height:31px;background:#000"></div>
<div class="a" style="left:405.6px;top:608px;width:2.6px;height:31px;background:#000"></div>
<div class="a" style="left:414.4px;top:608px;width:3px;height:31px;background:#000"></div>
<div class="a" style="left:420.2px;top:608px;width:6.3px;height:31px;background:#000"></div>
<div class="a" style="left:429.3px;top:608px;width:2.6px;height:31px;background:#000"></div>
<div class="a" style="left:435.6px;top:608px;width:3px;height:31px;background:#000"></div>
<!-- bottom bar -->
<div class="a" style="left:1px;top:753px;width:1208px;height:35px;background:#ebebf0;border-bottom:1px solid #8a8a8a"></div>
<div class="a" style="left:1px;top:786px;width:1208px;height:1px;background:#fff"></div>
<div class="a" style="left:70px;top:758px;width:1px;height:26px;border-left:2px dotted #a0a0a8"></div>
<svg class="a" style="left:79px;top:760px" width="28" height="22" viewBox="0 0 34 26"><rect x="0.5" y="0.5" width="32" height="18.5" fill="url(#gf)" stroke="#555"/><path d="M3 5h23M3 9h14M3 13h14" stroke="#2a5aa8" stroke-width="1.1"/><path d="M5 19.5 L13 19.5 L13 25Z" fill="#f0a830" stroke="#555" stroke-width="0.6"/></svg>
<div class="t" style="left:115px;top:764px">Front</div>
<div class="a" style="left:151px;top:756px;width:1px;height:28px;background:#707070"></div>
<div class="a" style="left:157px;top:757px;width:64px;height:26px;background:#8acdf2"></div>
<svg class="a" style="left:159px;top:759px" width="27" height="22" viewBox="0 0 34 26"><rect x="0.5" y="5.5" width="26" height="19" fill="url(#gb)" stroke="#b08030"/><path d="M4 10h16M4 14h13M4 18h13" stroke="#c06a10" stroke-width="1.1"/><path d="M26 4 L26.5 0.5 L33 6 L33 24.5 L27 24.5Z" fill="url(#gb2)" stroke="#555" stroke-width="0.7"/></svg>
<div class="t" style="left:192px;top:764px">Back</div>
<div class="a" style="left:225px;top:756px;width:1px;height:28px;background:#707070"></div>
<svg class="a" style="left:232px;top:760px" width="29" height="21" viewBox="0 0 36 24"><rect x="0.5" y="0.5" width="29" height="21.5" fill="#f4f4f6" stroke="#a8a8a8"/><rect x="1" y="1" width="28" height="2.5" fill="#f8d8a0"/><rect x="20" y="1" width="9" height="2.5" fill="#f4a020"/><path d="M6 6.5h17M6 10.5h17M6 14.5h17M6 18.5h13" stroke="#5a90d8" stroke-width="0.9"/><circle cx="28.5" cy="13" r="3.2" fill="#e8b890"/><path d="M25 12 Q28.5 7 32 12" fill="#4a3a2a"/><path d="M21.5 24 Q22 17 28.5 17 Q35 17 35.5 24Z" fill="#1a2a5a"/></svg>
<div class="t" style="left:266px;top:764px">User Profile</div>
<div class="a" style="left:334px;top:756px;width:1px;height:28px;background:#707070"></div>
<svg class="a" style="left:339px;top:755px" width="34" height="29" viewBox="0 0 38 33"><path d="M7 14 Q6 4 17 3" stroke="#4ac84a" stroke-width="3.5" fill="none"/><path d="M13 0L19 3L14 7Z" fill="#4ac84a"/><path d="M22 29 Q33 29 33 20" stroke="#4ac84a" stroke-width="3.5" fill="none"/><path d="M26 33L20 29L25 25Z" fill="#4ac84a"/><rect x="18.5" y="2.5" width="18" height="17.5" fill="url(#go)" stroke="#a06818"/><path d="M22 11h11M22 13.5h11" stroke="#a06010" stroke-width="1"/><rect x="1.5" y="14.5" width="17.5" height="17.5" fill="url(#gl)" stroke="#1a4a90"/><path d="M4 23h12M4 26h12" stroke="#1a3a80" stroke-width="1"/></svg>
<div class="t" style="left:375px;top:764px;letter-spacing:-0.22px">Copy current design to other side of Card</div>
<div class="a" style="left:601px;top:756px;width:1px;height:28px;background:#808080"></div>
<div class="a" style="left:876px;top:750px;width:1px;height:3px;background:#808080"></div>

<!-- ============ DIALOG ============ -->
<div class="a" style="left:433px;top:100px;width:8px;height:652px;background:linear-gradient(90deg,rgba(0,0,0,0),rgba(0,0,0,0.08))"></div>
<div class="a" style="left:440px;top:97px;width:749px;height:654px;background:#ebebf0;border:1px solid #8a8a8a;box-shadow:1px 1px 12px rgba(0,0,0,0.18)"></div>
<div class="a" style="left:441px;top:98px;width:747px;height:25px;background:#fff"></div>
<svg class="a" style="left:447px;top:102px" width="10" height="16" viewBox="0 0 10 16"><rect x="3" y="0" width="4" height="3" fill="#2a5a90"/><rect x="4" y="0.8" width="2" height="1.5" fill="#c04020"/><rect x="0.5" y="2.5" width="9" height="13" fill="#fff" stroke="#1a4a7a"/><rect x="1" y="4" width="8" height="3" fill="#f06040"/><circle cx="5" cy="9" r="1.6" fill="#111"/><path d="M2.2 13 Q5 9.5 7.8 13Z" fill="#111"/><rect x="1" y="13" width="8" height="2" fill="#6ac0f0"/></svg>
<div class="t" style="left:465.4px;top:103.8px;font-size:12.5px;letter-spacing:0;color:#000;">Print</div>
<div class="a" style="left:1069px;top:110px;width:10px;height:1px;background:#c4c4c4"></div>
<div class="a" style="left:1114px;top:105px;width:10px;height:10px;border:1px solid #000"></div>
<svg class="a" style="left:1159px;top:104px" width="12" height="12"><path d="M1 1L11 11M11 1L1 11" stroke="#000" stroke-width="1.1"/></svg>
<div class="a" style="left:441px;top:130px;width:745px;height:616px;border:1px solid #dadade"></div>
<div class="a" style="left:447.3px;top:128px;width:125.4px;height:5px;background:#ebebf0"></div>
<div class="t" style="left:450.3px;top:125.3px;font-size:12.7px;letter-spacing:0;color:#000;">Print Settings Format</div>
<div class="a" style="left:452px;top:146px;width:324px;height:85px;border:1px solid #dadade"></div>
<div class="a" style="left:458.3px;top:144px;width:71.2px;height:5px;background:#ebebf0"></div>
<div class="t" style="left:461.3px;top:140.1px;font-size:12.7px;letter-spacing:0;color:#000;">Print Profile</div>
<div class="a" style="left:460px;top:158px;width:213px;height:64px;background:#fff;border:1px solid #7a7a7a;"></div>
<div class="a" style="left:462px;top:160px;width:209px;height:15px;background:#0078d7"></div>
<div class="t" style="left:464.9px;top:162.3px;font-size:12.7px;letter-spacing:0;color:#fff;">Default.drp</div>
<div class="a" style="left:693px;top:155px;width:73px;height:21px;background:#e1e1e1;border:1px solid #adadad;"></div>
<div class="t" style="left:718.2px;top:160.0px;font-size:12.7px;letter-spacing:0px;color:#000">Add</div>
<div class="a" style="left:693px;top:180px;width:73px;height:21px;background:#e1e1e1;border:1px solid #adadad;"></div>
<div class="t" style="left:718.8px;top:185.0px;font-size:12.7px;letter-spacing:0px;color:#000">Edit</div>
<div class="a" style="left:693px;top:204px;width:73px;height:21px;background:#e1e1e1;border:1px solid #adadad;"></div>
<div class="t" style="left:711.1px;top:209.0px;font-size:12.7px;letter-spacing:0px;color:#000">Delete</div>
<div class="a" style="left:452px;top:240px;width:324px;height:149px;border:1px solid #dadade"></div>
<div class="a" style="left:458.3px;top:238px;width:120.7px;height:5px;background:#ebebf0"></div>
<div class="t" style="left:461.3px;top:236.1px;font-size:12.7px;letter-spacing:0;color:#000;">Page Properties&nbsp;&nbsp;(in)</div>
<div class="t" style="left:463.3px;top:258.1px;font-size:12.7px;letter-spacing:0;color:#000;">Printer :</div>
<div class="a" style="left:523px;top:253px;width:244px;height:23px;background:#e5e5e5;border:1px solid #adadad;"></div>
<div class="t" style="left:527.0px;top:259.0px;font-size:12.7px;letter-spacing:0;color:#000;">Microsoft XPS Document Writer</div>
<svg class="a" style="left:750px;top:262px" width="11" height="7"><path d="M0.5 0.5L5.5 5.5L10.5 0.5" stroke="#333" fill="none" stroke-width="1.1"/></svg>
<div class="a" style="left:524px;top:280px;width:242px;height:21px;background:#e1e1e1;border:1px solid #adadad;"></div>
<div class="t" style="left:580.8px;top:285.0px;font-size:12.7px;letter-spacing:0px;color:#000">Change Printer Setting</div>
<div class="t" style="left:463.3px;top:312.3px;font-size:12.7px;letter-spacing:0;color:#000;">Paper :</div>
<div class="a" style="left:536px;top:308px;width:80px;height:21px;background:#f0f0f0;border:1px solid #7a7a7a;"></div>
<div class="t" style="left:538.5px;top:313.0px;font-size:12.7px;letter-spacing:0;color:#000;">Letter</div>
<div class="a" style="left:669px;top:307px;width:97px;height:21px;background:#e1e1e1;border:1px solid #adadad;"></div>
<div class="t" style="left:681.5px;top:312.0px;font-size:12.7px;letter-spacing:0px;color:#000">Change Page</div>
<div class="t" style="left:463.3px;top:338.3px;font-size:12.7px;letter-spacing:0;color:#000;">Orientation :</div>
<div class="a" style="left:536px;top:333px;width:80px;height:22px;background:#e5e5e5;border:1px solid #adadad;"></div>
<div class="t" style="left:540.0px;top:338.5px;font-size:12.7px;letter-spacing:0;color:#000;">Portrait</div>
<svg class="a" style="left:599px;top:342px" width="11" height="7"><path d="M0.5 0.5L5.5 5.5L10.5 0.5" stroke="#333" fill="none" stroke-width="1.1"/></svg>
<div class="t" style="left:625.0px;top:339.1px;font-size:12.7px;letter-spacing:0;color:#000;">Size :</div>
<div class="a" style="left:670px;top:334px;width:97px;height:21px;background:#f0f0f0;border:1px solid #7a7a7a;"></div>
<div class="t" style="left:672.5px;top:339.0px;font-size:12.7px;letter-spacing:0;color:#000;">8.5x11</div>
<div class="t" style="left:463.3px;top:364.7px;font-size:12.7px;letter-spacing:0;color:#000;">Width :</div>
<div class="a" style="left:536px;top:360px;width:80px;height:21px;background:#fff;border:1px solid #7a7a7a;"></div>
<div class="t" style="left:538.5px;top:365.0px;font-size:12.7px;letter-spacing:0;color:#000;">8.5</div>
<div class="t" style="left:625.0px;top:365.5px;font-size:12.7px;letter-spacing:0;color:#000;">Height :</div>
<div class="a" style="left:670px;top:360px;width:97px;height:21px;background:#fff;border:1px solid #7a7a7a;"></div>
<div class="t" style="left:672.5px;top:365.0px;font-size:12.7px;letter-spacing:0;color:#000;">11</div>
<div class="a" style="left:452px;top:397px;width:324px;height:69px;border:1px solid #dadade"></div>
<div class="a" style="left:458.3px;top:395px;width:100px;height:5px;background:#ebebf0"></div>
<div class="t" style="left:461.3px;top:392.9px;font-size:12.7px;letter-spacing:0;color:#000;">Print Margin:(in)</div>
<div class="t" style="left:462.8px;top:413.5px;font-size:12.7px;letter-spacing:0;color:#000;">Left :</div>
<div class="a" style="left:536px;top:410px;width:80px;height:21px;background:#fff;border:1px solid #7a7a7a;"></div>
<div class="t" style="left:538.5px;top:415.0px;font-size:12.7px;letter-spacing:0;color:#000;">0.6</div>
<div class="t" style="left:624.9px;top:413.5px;font-size:12.7px;letter-spacing:0;color:#000;">Right :</div>
<div class="a" style="left:686px;top:410px;width:81px;height:21px;background:#fff;border:1px solid #7a7a7a;"></div>
<div class="t" style="left:688.5px;top:415.0px;font-size:12.7px;letter-spacing:0;color:#000;">0</div>
<div class="t" style="left:462.8px;top:439.4px;font-size:12.7px;letter-spacing:0;color:#000;">Top :</div>
<div class="a" style="left:536px;top:434px;width:80px;height:21px;background:#fff;border:1px solid #7a7a7a;"></div>
<div class="t" style="left:538.5px;top:439.0px;font-size:12.7px;letter-spacing:0;color:#000;">0.4</div>
<div class="t" style="left:624.9px;top:439.4px;font-size:12.7px;letter-spacing:0;color:#000;">Bottom :</div>
<div class="a" style="left:686px;top:434px;width:81px;height:21px;background:#fff;border:1px solid #7a7a7a;"></div>
<div class="t" style="left:688.5px;top:439.0px;font-size:12.7px;letter-spacing:0;color:#000;">0</div>
<div class="a" style="left:452px;top:475px;width:324px;height:134px;border:1px solid #dadade"></div>
<div class="a" style="left:458.3px;top:473px;width:150px;height:5px;background:#ebebf0"></div>
<div class="t" style="left:461.3px;top:470.9px;font-size:12.7px;letter-spacing:0;color:#000;">Margins and Spacing&nbsp;&nbsp;(in)</div>
<div class="t" style="left:462.8px;top:492.7px;font-size:12.7px;letter-spacing:0;color:#000;">Card width :</div>
<div class="a" style="left:536px;top:489px;width:80px;height:21px;background:#f0f0f0;border:1px solid #c8c8c8;"></div>
<div class="t" style="left:538.5px;top:494.0px;font-size:12.7px;letter-spacing:0;color:#8a8a8a;">3.35</div>
<div class="a" style="left:600px;top:491px;width:15px;height:17px;background:#f0f0f0;border-left:1px solid #e0e0e0"></div>
<div class="a" style="left:601px;top:499px;width:14px;height:1px;background:#d8d8d8"></div>
<svg class="a" style="left:604px;top:494px" width="8" height="4"><path d="M0 4L4 0L8 4Z" fill="#b0b0b0"/></svg>
<svg class="a" style="left:604px;top:502px" width="8" height="4"><path d="M0 0L4 4L8 0Z" fill="#b0b0b0"/></svg>
<div class="t" style="left:624.9px;top:492.7px;font-size:12.7px;letter-spacing:0;color:#000;">Card height :</div>
<div class="a" style="left:707px;top:489px;width:60px;height:21px;background:#f0f0f0;border:1px solid #c8c8c8;"></div>
<div class="t" style="left:709.5px;top:494.0px;font-size:12.7px;letter-spacing:0;color:#8a8a8a;">2.13</div>
<div class="a" style="left:751px;top:491px;width:15px;height:17px;background:#f0f0f0;border-left:1px solid #e0e0e0"></div>
<div class="a" style="left:752px;top:499px;width:14px;height:1px;background:#d8d8d8"></div>
<svg class="a" style="left:755px;top:494px" width="8" height="4"><path d="M0 4L4 0L8 4Z" fill="#b0b0b0"/></svg>
<svg class="a" style="left:755px;top:502px" width="8" height="4"><path d="M0 0L4 4L8 0Z" fill="#b0b0b0"/></svg>
<div class="t" style="left:462.8px;top:520.2px;font-size:12.7px;letter-spacing:0;color:#000;">Horizontal :</div>
<div class="a" style="left:536px;top:516px;width:80px;height:21px;background:#fff;border:1px solid #7a7a7a;"></div>
<div class="t" style="left:538.5px;top:521.0px;font-size:12.7px;letter-spacing:0;color:#000;">0.600</div>
<div class="a" style="left:600px;top:518px;width:15px;height:17px;background:#f4f4f4;border-left:1px solid #d0d0d0"></div>
<div class="a" style="left:601px;top:526px;width:14px;height:1px;background:#b0b0b0"></div>
<svg class="a" style="left:604px;top:521px" width="8" height="4"><path d="M0 4L4 0L8 4Z" fill="#000"/></svg>
<svg class="a" style="left:604px;top:529px" width="8" height="4"><path d="M0 0L4 4L8 0Z" fill="#000"/></svg>
<div class="t" style="left:624.9px;top:518.6px;font-size:12.7px;letter-spacing:0;color:#000;">Vertical :</div>
<div class="a" style="left:707px;top:517px;width:60px;height:21px;background:#fff;border:1px solid #7a7a7a;"></div>
<div class="t" style="left:709.5px;top:522.0px;font-size:12.7px;letter-spacing:0;color:#000;">0.600</div>
<div class="a" style="left:751px;top:519px;width:15px;height:17px;background:#f4f4f4;border-left:1px solid #d0d0d0"></div>
<div class="a" style="left:752px;top:527px;width:14px;height:1px;background:#b0b0b0"></div>
<svg class="a" style="left:755px;top:522px" width="8" height="4"><path d="M0 4L4 0L8 4Z" fill="#000"/></svg>
<svg class="a" style="left:755px;top:530px" width="8" height="4"><path d="M0 0L4 4L8 0Z" fill="#000"/></svg>
<div class="t" style="left:462.8px;top:546.9px;font-size:12.7px;letter-spacing:0;color:#000;">Margin :</div>
<div class="a" style="left:536px;top:543px;width:80px;height:21px;background:#fff;border:1px solid #7a7a7a;"></div>
<div class="t" style="left:538.5px;top:548.0px;font-size:12.7px;letter-spacing:0;color:#000;">0.600</div>
<div class="a" style="left:600px;top:545px;width:15px;height:17px;background:#f4f4f4;border-left:1px solid #d0d0d0"></div>
<div class="a" style="left:601px;top:553px;width:14px;height:1px;background:#b0b0b0"></div>
<svg class="a" style="left:604px;top:548px" width="8" height="4"><path d="M0 4L4 0L8 4Z" fill="#000"/></svg>
<svg class="a" style="left:604px;top:556px" width="8" height="4"><path d="M0 0L4 4L8 0Z" fill="#000"/></svg>
<div class="t" style="left:624.9px;top:540.9px;font-size:12.7px;letter-spacing:0;color:#000;">No of</div>
<div class="t" style="left:624.9px;top:555.2px;font-size:12.7px;letter-spacing:0;color:#000;">Column :</div>
<div class="a" style="left:707px;top:545px;width:60px;height:21px;background:#fff;border:1px solid #7a7a7a;"></div>
<div class="t" style="left:709.5px;top:550.0px;font-size:12.7px;letter-spacing:0;color:#000;">1</div>
<div class="a" style="left:751px;top:547px;width:15px;height:17px;background:#f4f4f4;border-left:1px solid #d0d0d0"></div>
<div class="a" style="left:752px;top:555px;width:14px;height:1px;background:#b0b0b0"></div>
<svg class="a" style="left:755px;top:550px" width="8" height="4"><path d="M0 4L4 0L8 4Z" fill="#000"/></svg>
<svg class="a" style="left:755px;top:558px" width="8" height="4"><path d="M0 0L4 4L8 0Z" fill="#000"/></svg>
<div class="t" style="left:462.8px;top:573.5px;font-size:12.7px;letter-spacing:0;color:#000;">Total Cells :</div>
<div class="a" style="left:536px;top:570px;width:80px;height:21px;background:#fff;border:1px solid #7a7a7a;"></div>
<div class="t" style="left:538.5px;top:575.0px;font-size:12.7px;letter-spacing:0;color:#000;">4</div>
<div class="a" style="left:600px;top:572px;width:15px;height:17px;background:#f4f4f4;border-left:1px solid #d0d0d0"></div>
<div class="a" style="left:601px;top:580px;width:14px;height:1px;background:#b0b0b0"></div>
<svg class="a" style="left:604px;top:575px" width="8" height="4"><path d="M0 4L4 0L8 4Z" fill="#000"/></svg>
<svg class="a" style="left:604px;top:583px" width="8" height="4"><path d="M0 0L4 4L8 0Z" fill="#000"/></svg>
<div class="t" style="left:624.9px;top:578.9px;font-size:12.7px;letter-spacing:0;color:#000;">Max Cells</div>
<div class="t" style="left:624.9px;top:593.3px;font-size:12.7px;letter-spacing:0;color:#000;">per Page :</div>
<div class="a" style="left:707px;top:573px;width:60px;height:21px;background:#fff;border:1px solid #7a7a7a;"></div>
<div class="t" style="left:709.5px;top:578.0px;font-size:12.7px;letter-spacing:0;color:#000;">4</div>
<div class="a" style="left:751px;top:575px;width:15px;height:17px;background:#f4f4f4;border-left:1px solid #d0d0d0"></div>
<div class="a" style="left:752px;top:583px;width:14px;height:1px;background:#b0b0b0"></div>
<svg class="a" style="left:755px;top:578px" width="8" height="4"><path d="M0 4L4 0L8 4Z" fill="#000"/></svg>
<svg class="a" style="left:755px;top:586px" width="8" height="4"><path d="M0 0L4 4L8 0Z" fill="#000"/></svg>
<div class="a" style="left:452px;top:619px;width:324px;height:127px;border:1px solid #dadade"></div>
<div class="a" style="left:458px;top:617px;width:122.4px;height:5px;background:#ebebf0"></div>
<div class="t" style="left:461.0px;top:614.1px;font-size:12.7px;letter-spacing:0;color:#000;">Sides and Alignment</div>
<div class="a" style="left:459.5px;top:631.1px;width:13px;height:13px;border-radius:50%;background:#fff;border:1px solid #333"></div>
<div class="a" style="left:462.5px;top:634.1px;width:7px;height:7px;border-radius:50%;background:#222"></div>
<div class="t" style="left:479.7px;top:632.9px;font-size:12.7px;letter-spacing:0;color:#000;">Both Sides</div>
<div class="a" style="left:459.5px;top:657.8px;width:13px;height:13px;border-radius:50%;background:#fff;border:1px solid #333"></div>
<div class="t" style="left:479.7px;top:659.9px;font-size:12.7px;letter-spacing:0;color:#000;">Only Front Side</div>
<div class="a" style="left:576px;top:654px;width:90px;height:23px;background:#d9d9d9;border:1px solid #cfcfcf;"></div>
<div class="t" style="left:580.0px;top:660.0px;font-size:12.7px;letter-spacing:0;color:#8a8a8a;">Head Up</div>
<svg class="a" style="left:649px;top:663px" width="11" height="7"><path d="M0.5 0.5L5.5 5.5L10.5 0.5" stroke="#a8a8a8" fill="none" stroke-width="1.1"/></svg>
<div class="a" style="left:459.5px;top:685.3px;width:13px;height:13px;border-radius:50%;background:#fff;border:1px solid #333"></div>
<div class="t" style="left:479.7px;top:687.4px;font-size:12.7px;letter-spacing:0;color:#000;">Only Back Side</div>
<div class="a" style="left:576px;top:682px;width:90px;height:23px;background:#d9d9d9;border:1px solid #cfcfcf;"></div>
<div class="t" style="left:580.0px;top:688.0px;font-size:12.7px;letter-spacing:0;color:#8a8a8a;">Head Up</div>
<svg class="a" style="left:649px;top:691px" width="11" height="7"><path d="M0.5 0.5L5.5 5.5L10.5 0.5" stroke="#a8a8a8" fill="none" stroke-width="1.1"/></svg>
<div class="a" style="left:458px;top:713px;width:208px;height:23px;background:#e5e5e5;border:1px solid #adadad;"></div>
<div class="t" style="left:462.0px;top:719.0px;font-size:12.7px;letter-spacing:0;color:#000;">Left-Right</div>
<svg class="a" style="left:649px;top:722px" width="11" height="7"><path d="M0.5 0.5L5.5 5.5L10.5 0.5" stroke="#333" fill="none" stroke-width="1.1"/></svg>
<div class="a" style="left:670px;top:627px;width:100px;height:114px;background:#f4f7fa;border:1px solid #8a98a8;"></div>
<div class="a" style="left:674px;top:632px;width:44px;height:22px;background:linear-gradient(#eaeaea,#d4d4d4);border:1px solid #b8b8b8"></div>
<div class="a" style="left:675px;top:633px;width:42px;height:4px;background:#5a9aee"></div>
<div class="t" style="left:679.0px;top:641.4px;font-size:12.0px;letter-spacing:0;color:#4a5a7a;">Side A</div>
<div class="a" style="left:722px;top:632px;width:44px;height:22px;background:linear-gradient(#eaeaea,#d4d4d4);border:1px solid #b8b8b8"></div>
<div class="a" style="left:723px;top:633px;width:42px;height:4px;background:#f8aa2a"></div>
<div class="t" style="left:727.0px;top:641.4px;font-size:12.0px;letter-spacing:0;color:#7a6a55;">Side B</div>
<div class="a" style="left:674px;top:659px;width:44px;height:22px;background:linear-gradient(#eaeaea,#d4d4d4);border:1px solid #b8b8b8"></div>
<div class="a" style="left:675px;top:660px;width:42px;height:4px;background:#5a9aee"></div>
<div class="t" style="left:679.0px;top:668.4px;font-size:12.0px;letter-spacing:0;color:#4a5a7a;">Side A</div>
<div class="a" style="left:722px;top:659px;width:44px;height:22px;background:linear-gradient(#eaeaea,#d4d4d4);border:1px solid #b8b8b8"></div>
<div class="a" style="left:723px;top:660px;width:42px;height:4px;background:#f8aa2a"></div>
<div class="t" style="left:727.0px;top:668.4px;font-size:12.0px;letter-spacing:0;color:#7a6a55;">Side B</div>
<div class="a" style="left:674px;top:686px;width:44px;height:22px;background:linear-gradient(#eaeaea,#d4d4d4);border:1px solid #b8b8b8"></div>
<div class="a" style="left:675px;top:687px;width:42px;height:4px;background:#5a9aee"></div>
<div class="t" style="left:679.0px;top:695.4px;font-size:12.0px;letter-spacing:0;color:#4a5a7a;">Side A</div>
<div class="a" style="left:722px;top:686px;width:44px;height:22px;background:linear-gradient(#eaeaea,#d4d4d4);border:1px solid #b8b8b8"></div>
<div class="a" style="left:723px;top:687px;width:42px;height:4px;background:#f8aa2a"></div>
<div class="t" style="left:727.0px;top:695.4px;font-size:12.0px;letter-spacing:0;color:#7a6a55;">Side B</div>
<div class="a" style="left:674px;top:713px;width:44px;height:22px;background:linear-gradient(#eaeaea,#d4d4d4);border:1px solid #b8b8b8"></div>
<div class="a" style="left:675px;top:714px;width:42px;height:4px;background:#5a9aee"></div>
<div class="t" style="left:679.0px;top:722.4px;font-size:12.0px;letter-spacing:0;color:#4a5a7a;">Side A</div>
<div class="a" style="left:722px;top:713px;width:44px;height:22px;background:linear-gradient(#eaeaea,#d4d4d4);border:1px solid #b8b8b8"></div>
<div class="a" style="left:723px;top:714px;width:42px;height:4px;background:#f8aa2a"></div>
<div class="t" style="left:727.0px;top:722.4px;font-size:12.0px;letter-spacing:0;color:#7a6a55;">Side B</div>
<div class="t" style="left:836.0px;top:147.4px;font-size:12.7px;letter-spacing:0;color:#000;">Measurement Unit :</div>
<div class="a" style="left:958px;top:143px;width:129px;height:22px;background:#e5e5e5;border:1px solid #adadad;"></div>
<div class="t" style="left:962.0px;top:148.5px;font-size:12.7px;letter-spacing:0;color:#000;">Inches (in)</div>
<svg class="a" style="left:1070px;top:152px" width="11" height="7"><path d="M0.5 0.5L5.5 5.5L10.5 0.5" stroke="#333" fill="none" stroke-width="1.1"/></svg>
<div class="a" style="left:792px;top:171px;width:379px;height:477px;background:#c0c0c0;border:1px solid #6a6a6a;"></div>
<div class="a" style="left:818px;top:182px;width:334px;height:458px;background:#fff;border:1px solid #8a8a8a;border-right-color:#ddd;border-bottom-color:#ddd"></div>
<div class="a" style="left:829px;top:191.5px;width:143px;height:90px;border-radius:6px;overflow:hidden;background:linear-gradient(160deg,#ece7c8 0%,#f8f7ec 35%,#fcfcf6 55%,#f0eed8 80%,#e4dfbc 100%);border:1px solid #d8d0a0"><div class="a" style="left:0;top:0;width:143px;height:10px;background:linear-gradient(90deg,#e6e0bc,#f2eed8 40%,#e8e2c4 70%,#ece6c8)"></div><div class="a" style="left:0;top:10px;width:143px;height:9px;background:#ab9b4b"></div><div class="a" style="left:126px;top:14px;width:70px;height:66px;border-radius:50%;background:#e4dec0"></div><div class="a" style="left:133px;top:20px;width:60px;height:54px;border-radius:50%;background:#cfc48e"></div><svg class="a" style="left:0;top:19px" width="30" height="58"><path d="M0 0H30Q8 22 6 58H0Z" fill="#e6e0c2"/><path d="M0 0H22Q4 24 3 58H0Z" fill="#c9bd84"/></svg><div class="a" style="left:0;top:76px;width:143px;height:14px;background:#ab9b4b"></div></div>
<div class="t" style="left:877.5px;top:193.2px;font-size:6.0px;letter-spacing:0;color:#111;font-weight:bold;">Student ID Card</div>
<div class="t" style="left:888.0px;top:199.7px;font-size:4.0px;letter-spacing:0;color:#222;font-weight:bold;">2020-2021</div>
<div class="t" style="left:862.0px;top:205.5px;font-size:5.4px;letter-spacing:0;color:#f4f0dc;font-weight:bold;">Registration No&nbsp;&nbsp;:&nbsp;&nbsp;S - 102121</div>
<svg class="a" style="left:833.3px;top:218.4px" width="35" height="38" viewBox="0 0 35 38"><rect x="0" y="0" width="35" height="38" fill="#e4e4e4"/><rect x="0.5" y="0.5" width="34" height="37" fill="#ffffff"/><path d="M1 38 Q2 30 10 28 L25 28 Q33 30 34 38Z" fill="#2a3a5a"/><path d="M14 24 L21 24 L22 30 L17.5 34 L13 30Z" fill="#e8b898"/><ellipse cx="17.8" cy="15.5" rx="7.3" ry="9.8" fill="#e8b898"/><path d="M10 16 Q8 4 17 3 Q27 3 26 14 Q24 8 18 8 Q12 8 10 16Z" fill="#3a2a20"/><path d="M14.5 21 Q17.8 23 21 21" stroke="#b06050" stroke-width="0.9" fill="none"/><path d="M13 15h3M19.5 15h3" stroke="#333" stroke-width="1"/></svg>
<svg class="a" style="left:838px;top:257.0px" width="16" height="8"><path d="M1 7 Q4 0 6 4 Q7 7 9 3 Q10 6 15 4" stroke="#333" stroke-width="0.6" fill="none"/></svg>
<div class="t" style="left:876.0px;top:219.2px;font-size:5.36px;letter-spacing:0;color:#1a1a1a;font-weight:bold;">Student Name</div>
<div class="t" style="left:916.3px;top:219.1px;font-size:5.4px;letter-spacing:0;color:#1a1a1a;font-weight:bold;">:</div>
<div class="t" style="left:920.0px;top:219.0px;font-size:5.5px;letter-spacing:0;color:#1a1a1a;font-weight:bold;">Willow Hunt</div>
<div class="t" style="left:876.0px;top:230.9px;font-size:5.36px;letter-spacing:0;color:#1a1a1a;font-weight:bold;">Father's Name</div>
<div class="t" style="left:916.3px;top:230.8px;font-size:5.4px;letter-spacing:0;color:#1a1a1a;font-weight:bold;">:</div>
<div class="t" style="left:920.0px;top:230.7px;font-size:5.5px;letter-spacing:0;color:#1a1a1a;font-weight:bold;">Haviva Hunt</div>
<div class="t" style="left:876.0px;top:243.2px;font-size:5.36px;letter-spacing:0;color:#1a1a1a;font-weight:bold;">D.O.B</div>
<div class="t" style="left:916.3px;top:243.1px;font-size:5.4px;letter-spacing:0;color:#1a1a1a;font-weight:bold;">:</div>
<div class="t" style="left:920.0px;top:243.0px;font-size:5.5px;letter-spacing:0;color:#1a1a1a;font-weight:bold;">5/10/2002</div>
<div class="t" style="left:876.0px;top:254.5px;font-size:5.36px;letter-spacing:0;color:#1a1a1a;font-weight:bold;">Class</div>
<div class="t" style="left:916.3px;top:254.4px;font-size:5.4px;letter-spacing:0;color:#1a1a1a;font-weight:bold;">:</div>
<div class="t" style="left:920.0px;top:254.3px;font-size:5.5px;letter-spacing:0;color:#1a1a1a;font-weight:bold;">12-A</div>
<div class="t" style="left:858.0px;top:271.3px;font-size:6.7px;letter-spacing:0;color:#f8f4e4;font-weight:bold;">Wills Mounts State School</div>
<div class="a" style="left:998px;top:191.5px;width:143px;height:90px;border-radius:6px;overflow:hidden;background:linear-gradient(172deg,#f4f2e0 0%,#fafaf0 30%,#fbfbf5 55%,#f2f0dc 78%,#e2dcb4 100%);border:1px solid #d8d0a0"><div class="a" style="left:0;top:0;width:143px;height:13px;background:#ab9b4b"></div></div>
<div class="t" style="left:1026.6px;top:195.0px;font-size:6.7px;letter-spacing:0;color:#f8f4e4;font-weight:bold;">Wills Mounts State School</div>
<div class="t" style="left:1002.7px;top:207.7px;font-size:5.45px;letter-spacing:0;color:#222;">Department</div>
<div class="t" style="left:1034.5px;top:207.7px;font-size:5.45px;letter-spacing:0;color:#222;">:</div>
<div class="t" style="left:1038.3px;top:207.6px;font-size:5.5px;letter-spacing:0;color:#222;">Sociology</div>
<div class="t" style="left:1002.7px;top:216.4px;font-size:5.45px;letter-spacing:0;color:#222;">Phone No.</div>
<div class="t" style="left:1034.5px;top:216.4px;font-size:5.45px;letter-spacing:0;color:#222;">:</div>
<div class="t" style="left:1038.3px;top:216.3px;font-size:5.5px;letter-spacing:0;color:#222;">(304) 506-63xx</div>
<div class="t" style="left:1002.7px;top:225.1px;font-size:5.45px;letter-spacing:0;color:#222;">Add.</div>
<div class="t" style="left:1034.5px;top:225.1px;font-size:5.45px;letter-spacing:0;color:#222;">:</div>
<div class="t" style="left:1038.3px;top:225.0px;font-size:5.5px;letter-spacing:0;color:#222;">P.O. Box 372 Montes Rd.Springdale</div>
<div class="a" style="left:1018.5px;top:268.5px;width:0.8px;height:9px;background:#111"></div><div class="a" style="left:1020.3px;top:268.5px;width:1.6px;height:9px;background:#111"></div><div class="a" style="left:1023.3px;top:268.5px;width:0.8px;height:9px;background:#111"></div><div class="a" style="left:1024.8px;top:268.5px;width:1.6px;height:9px;background:#111"></div><div class="a" style="left:1027.4px;top:268.5px;width:1.2px;height:9px;background:#111"></div><div class="a" style="left:1030.0px;top:268.5px;width:0.8px;height:9px;background:#111"></div><div class="a" style="left:1031.5px;top:268.5px;width:1.6px;height:9px;background:#111"></div><div class="a" style="left:1034.1px;top:268.5px;width:0.8px;height:9px;background:#111"></div><div class="a" style="left:1035.6px;top:268.5px;width:1.2px;height:9px;background:#111"></div><div class="a" style="left:1037.5px;top:268.5px;width:1.6px;height:9px;background:#111"></div><div class="a" style="left:1039.8px;top:268.5px;width:1.2px;height:9px;background:#111"></div><div class="a" style="left:1042.0px;top:268.5px;width:1.6px;height:9px;background:#111"></div><div class="a" style="left:1044.6px;top:268.5px;width:1.2px;height:9px;background:#111"></div><div class="a" style="left:1046.8px;top:268.5px;width:0.8px;height:9px;background:#111"></div><div class="a" style="left:1049.0px;top:268.5px;width:1.2px;height:9px;background:#111"></div><div class="a" style="left:1051.6px;top:268.5px;width:1.2px;height:9px;background:#111"></div><div class="a" style="left:1053.5px;top:268.5px;width:1.6px;height:9px;background:#111"></div><div class="a" style="left:1055.8px;top:268.5px;width:1.6px;height:9px;background:#111"></div><div class="a" style="left:1058.8px;top:268.5px;width:1.6px;height:9px;background:#111"></div><div class="a" style="left:1061.1px;top:268.5px;width:0.8px;height:9px;background:#111"></div><div class="a" style="left:1062.6px;top:268.5px;width:0.8px;height:9px;background:#111"></div><div class="a" style="left:1064.1px;top:268.5px;width:1.2px;height:9px;background:#111"></div><div class="a" style="left:1066.7px;top:268.5px;width:1.2px;height:9px;background:#111"></div><div class="a" style="left:1068.6px;top:268.5px;width:1.2px;height:9px;background:#111"></div><div class="a" style="left:1071.2px;top:268.5px;width:1.6px;height:9px;background:#111"></div><div class="a" style="left:1073.8px;top:268.5px;width:1.6px;height:9px;background:#111"></div><div class="a" style="left:1076.1px;top:268.5px;width:1.2px;height:9px;background:#111"></div><div class="a" style="left:1078.7px;top:268.5px;width:0.8px;height:9px;background:#111"></div><div class="a" style="left:1080.2px;top:268.5px;width:1.6px;height:9px;background:#111"></div><div class="a" style="left:1082.5px;top:268.5px;width:0.8px;height:9px;background:#111"></div><div class="a" style="left:1084.0px;top:268.5px;width:1.6px;height:9px;background:#111"></div><div class="a" style="left:1086.6px;top:268.5px;width:0.8px;height:9px;background:#111"></div><div class="a" style="left:1088.8px;top:268.5px;width:0.8px;height:9px;background:#111"></div><div class="a" style="left:1090.3px;top:268.5px;width:1.6px;height:9px;background:#111"></div><div class="a" style="left:1093.3px;top:268.5px;width:1.2px;height:9px;background:#111"></div><div class="a" style="left:1095.9px;top:268.5px;width:0.8px;height:9px;background:#111"></div><div class="a" style="left:1097.4px;top:268.5px;width:0.8px;height:9px;background:#111"></div><div class="a" style="left:1099.2px;top:268.5px;width:0.8px;height:9px;background:#111"></div><div class="a" style="left:1100.7px;top:268.5px;width:1.2px;height:9px;background:#111"></div><div class="a" style="left:1102.9px;top:268.5px;width:1.6px;height:9px;background:#111"></div><div class="a" style="left:1105.5px;top:268.5px;width:0.8px;height:9px;background:#111"></div><div class="a" style="left:1107.7px;top:268.5px;width:1.2px;height:9px;background:#111"></div><div class="a" style="left:1109.6px;top:268.5px;width:0.8px;height:9px;background:#111"></div><div class="a" style="left:1111.1px;top:268.5px;width:1.2px;height:9px;background:#111"></div><div class="a" style="left:1113.3px;top:268.5px;width:1.2px;height:9px;background:#111"></div><div class="a" style="left:1115.2px;top:268.5px;width:0.8px;height:9px;background:#111"></div><div class="a" style="left:1116.7px;top:268.5px;width:1.6px;height:9px;background:#111"></div>
<div class="a" style="left:829px;top:307.5px;width:143px;height:90px;border-radius:6px;overflow:hidden;background:linear-gradient(160deg,#ece7c8 0%,#f8f7ec 35%,#fcfcf6 55%,#f0eed8 80%,#e4dfbc 100%);border:1px solid #d8d0a0"><div class="a" style="left:0;top:0;width:143px;height:10px;background:linear-gradient(90deg,#e6e0bc,#f2eed8 40%,#e8e2c4 70%,#ece6c8)"></div><div class="a" style="left:0;top:10px;width:143px;height:9px;background:#ab9b4b"></div><div class="a" style="left:126px;top:14px;width:70px;height:66px;border-radius:50%;background:#e4dec0"></div><div class="a" style="left:133px;top:20px;width:60px;height:54px;border-radius:50%;background:#cfc48e"></div><svg class="a" style="left:0;top:19px" width="30" height="58"><path d="M0 0H30Q8 22 6 58H0Z" fill="#e6e0c2"/><path d="M0 0H22Q4 24 3 58H0Z" fill="#c9bd84"/></svg><div class="a" style="left:0;top:76px;width:143px;height:14px;background:#ab9b4b"></div></div>
<div class="t" style="left:877.5px;top:309.2px;font-size:6.0px;letter-spacing:0;color:#111;font-weight:bold;">Student ID Card</div>
<div class="t" style="left:888.0px;top:315.7px;font-size:4.0px;letter-spacing:0;color:#222;font-weight:bold;">2020-2021</div>
<div class="t" style="left:862.0px;top:321.5px;font-size:5.4px;letter-spacing:0;color:#f4f0dc;font-weight:bold;">Registration No&nbsp;&nbsp;:&nbsp;&nbsp;S - 102122</div>
<svg class="a" style="left:833.3px;top:334.4px" width="35" height="38" viewBox="0 0 35 38"><rect x="0" y="0" width="35" height="38" fill="#e4e4e4"/><rect x="0.5" y="0.5" width="34" height="37" fill="#f4c8c0"/><path d="M1 38 Q2 30 10 28 L25 28 Q33 30 34 38Z" fill="#a8c8e8"/><path d="M14 24 L21 24 L22 30 L17.5 34 L13 30Z" fill="#e8b898"/><ellipse cx="17.8" cy="15.5" rx="7.3" ry="9.8" fill="#e8b898"/><path d="M10 16 Q8 4 17 3 Q27 3 26 14 Q24 8 18 8 Q12 8 10 16Z" fill="#3a2a20"/><path d="M14.5 21 Q17.8 23 21 21" stroke="#b06050" stroke-width="0.9" fill="none"/><path d="M13 15h3M19.5 15h3" stroke="#333" stroke-width="1"/></svg>
<svg class="a" style="left:838px;top:373.0px" width="16" height="8"><path d="M1 7 Q4 0 6 4 Q7 7 9 3 Q10 6 15 4" stroke="#333" stroke-width="0.6" fill="none"/></svg>
<div class="t" style="left:876.0px;top:335.2px;font-size:5.36px;letter-spacing:0;color:#1a1a1a;font-weight:bold;">Student Name</div>
<div class="t" style="left:916.3px;top:335.1px;font-size:5.4px;letter-spacing:0;color:#1a1a1a;font-weight:bold;">:</div>
<div class="t" style="left:920.0px;top:335.0px;font-size:5.5px;letter-spacing:0;color:#1a1a1a;font-weight:bold;">Judith Floyd</div>
<div class="t" style="left:876.0px;top:346.9px;font-size:5.36px;letter-spacing:0;color:#1a1a1a;font-weight:bold;">Father's Name</div>
<div class="t" style="left:916.3px;top:346.8px;font-size:5.4px;letter-spacing:0;color:#1a1a1a;font-weight:bold;">:</div>
<div class="t" style="left:920.0px;top:346.7px;font-size:5.5px;letter-spacing:0;color:#1a1a1a;font-weight:bold;">Blythe Floyd</div>
<div class="t" style="left:876.0px;top:359.2px;font-size:5.36px;letter-spacing:0;color:#1a1a1a;font-weight:bold;">D.O.B</div>
<div class="t" style="left:916.3px;top:359.1px;font-size:5.4px;letter-spacing:0;color:#1a1a1a;font-weight:bold;">:</div>
<div class="t" style="left:920.0px;top:359.0px;font-size:5.5px;letter-spacing:0;color:#1a1a1a;font-weight:bold;">11/25/2003</div>
<div class="t" style="left:876.0px;top:370.5px;font-size:5.36px;letter-spacing:0;color:#1a1a1a;font-weight:bold;">Class</div>
<div class="t" style="left:916.3px;top:370.4px;font-size:5.4px;letter-spacing:0;color:#1a1a1a;font-weight:bold;">:</div>
<div class="t" style="left:920.0px;top:370.3px;font-size:5.5px;letter-spacing:0;color:#1a1a1a;font-weight:bold;">12-A</div>
<div class="t" style="left:858.0px;top:387.3px;font-size:6.7px;letter-spacing:0;color:#f8f4e4;font-weight:bold;">Wills Mounts State School</div>
<div class="a" style="left:998px;top:307.5px;width:143px;height:90px;border-radius:6px;overflow:hidden;background:linear-gradient(172deg,#f4f2e0 0%,#fafaf0 30%,#fbfbf5 55%,#f2f0dc 78%,#e2dcb4 100%);border:1px solid #d8d0a0"><div class="a" style="left:0;top:0;width:143px;height:13px;background:#ab9b4b"></div></div>
<div class="t" style="left:1026.6px;top:311.0px;font-size:6.7px;letter-spacing:0;color:#f8f4e4;font-weight:bold;">Wills Mounts State School</div>
<div class="t" style="left:1002.7px;top:323.7px;font-size:5.45px;letter-spacing:0;color:#222;">Department</div>
<div class="t" style="left:1034.5px;top:323.7px;font-size:5.45px;letter-spacing:0;color:#222;">:</div>
<div class="t" style="left:1038.3px;top:323.6px;font-size:5.5px;letter-spacing:0;color:#222;">Sociology</div>
<div class="t" style="left:1002.7px;top:332.4px;font-size:5.45px;letter-spacing:0;color:#222;">Phone No.</div>
<div class="t" style="left:1034.5px;top:332.4px;font-size:5.45px;letter-spacing:0;color:#222;">:</div>
<div class="t" style="left:1038.3px;top:332.3px;font-size:5.5px;letter-spacing:0;color:#222;">(425) 288-23xx</div>
<div class="t" style="left:1002.7px;top:341.1px;font-size:5.45px;letter-spacing:0;color:#222;">Add.</div>
<div class="t" style="left:1034.5px;top:341.1px;font-size:5.45px;letter-spacing:0;color:#222;">:</div>
<div class="t" style="left:1038.3px;top:341.0px;font-size:5.5px;letter-spacing:0;color:#222;">Sollicitudin Road,Burlingame Colorado</div>
<div class="a" style="left:1018.5px;top:384.5px;width:1.6px;height:9px;background:#111"></div><div class="a" style="left:1021.5px;top:384.5px;width:1.6px;height:9px;background:#111"></div><div class="a" style="left:1024.1px;top:384.5px;width:0.8px;height:9px;background:#111"></div><div class="a" style="left:1025.6px;top:384.5px;width:1.6px;height:9px;background:#111"></div><div class="a" style="left:1028.6px;top:384.5px;width:0.8px;height:9px;background:#111"></div><div class="a" style="left:1030.1px;top:384.5px;width:1.6px;height:9px;background:#111"></div><div class="a" style="left:1032.7px;top:384.5px;width:0.8px;height:9px;background:#111"></div><div class="a" style="left:1034.2px;top:384.5px;width:0.8px;height:9px;background:#111"></div><div class="a" style="left:1036.4px;top:384.5px;width:1.6px;height:9px;background:#111"></div><div class="a" style="left:1039.0px;top:384.5px;width:0.8px;height:9px;background:#111"></div><div class="a" style="left:1041.2px;top:384.5px;width:0.8px;height:9px;background:#111"></div><div class="a" style="left:1043.4px;top:384.5px;width:0.8px;height:9px;background:#111"></div><div class="a" style="left:1044.9px;top:384.5px;width:0.8px;height:9px;background:#111"></div><div class="a" style="left:1046.4px;top:384.5px;width:0.8px;height:9px;background:#111"></div><div class="a" style="left:1048.6px;top:384.5px;width:0.8px;height:9px;background:#111"></div><div class="a" style="left:1050.4px;top:384.5px;width:1.2px;height:9px;background:#111"></div><div class="a" style="left:1052.6px;top:384.5px;width:0.8px;height:9px;background:#111"></div><div class="a" style="left:1054.8px;top:384.5px;width:0.8px;height:9px;background:#111"></div><div class="a" style="left:1057.0px;top:384.5px;width:1.2px;height:9px;background:#111"></div><div class="a" style="left:1059.2px;top:384.5px;width:0.8px;height:9px;background:#111"></div><div class="a" style="left:1061.4px;top:384.5px;width:0.8px;height:9px;background:#111"></div><div class="a" style="left:1063.2px;top:384.5px;width:1.2px;height:9px;background:#111"></div><div class="a" style="left:1065.4px;top:384.5px;width:0.8px;height:9px;background:#111"></div><div class="a" style="left:1067.6px;top:384.5px;width:1.2px;height:9px;background:#111"></div><div class="a" style="left:1069.8px;top:384.5px;width:0.8px;height:9px;background:#111"></div><div class="a" style="left:1072.0px;top:384.5px;width:1.2px;height:9px;background:#111"></div><div class="a" style="left:1073.9px;top:384.5px;width:0.8px;height:9px;background:#111"></div><div class="a" style="left:1076.1px;top:384.5px;width:0.8px;height:9px;background:#111"></div><div class="a" style="left:1077.9px;top:384.5px;width:0.8px;height:9px;background:#111"></div><div class="a" style="left:1079.7px;top:384.5px;width:1.6px;height:9px;background:#111"></div><div class="a" style="left:1082.0px;top:384.5px;width:0.8px;height:9px;background:#111"></div><div class="a" style="left:1084.2px;top:384.5px;width:0.8px;height:9px;background:#111"></div><div class="a" style="left:1085.7px;top:384.5px;width:0.8px;height:9px;background:#111"></div><div class="a" style="left:1087.2px;top:384.5px;width:1.6px;height:9px;background:#111"></div><div class="a" style="left:1089.8px;top:384.5px;width:1.6px;height:9px;background:#111"></div><div class="a" style="left:1092.4px;top:384.5px;width:0.8px;height:9px;background:#111"></div><div class="a" style="left:1094.6px;top:384.5px;width:0.8px;height:9px;background:#111"></div><div class="a" style="left:1096.8px;top:384.5px;width:1.2px;height:9px;background:#111"></div><div class="a" style="left:1099.0px;top:384.5px;width:0.8px;height:9px;background:#111"></div><div class="a" style="left:1100.8px;top:384.5px;width:1.2px;height:9px;background:#111"></div><div class="a" style="left:1102.7px;top:384.5px;width:1.6px;height:9px;background:#111"></div><div class="a" style="left:1105.0px;top:384.5px;width:0.8px;height:9px;background:#111"></div><div class="a" style="left:1106.5px;top:384.5px;width:0.8px;height:9px;background:#111"></div><div class="a" style="left:1108.0px;top:384.5px;width:0.8px;height:9px;background:#111"></div><div class="a" style="left:1109.8px;top:384.5px;width:1.6px;height:9px;background:#111"></div><div class="a" style="left:1112.1px;top:384.5px;width:0.8px;height:9px;background:#111"></div><div class="a" style="left:1113.9px;top:384.5px;width:0.8px;height:9px;background:#111"></div><div class="a" style="left:1116.1px;top:384.5px;width:0.8px;height:9px;background:#111"></div>
<div class="a" style="left:829px;top:423.5px;width:143px;height:90px;border-radius:6px;overflow:hidden;background:linear-gradient(160deg,#ece7c8 0%,#f8f7ec 35%,#fcfcf6 55%,#f0eed8 80%,#e4dfbc 100%);border:1px solid #d8d0a0"><div class="a" style="left:0;top:0;width:143px;height:10px;background:linear-gradient(90deg,#e6e0bc,#f2eed8 40%,#e8e2c4 70%,#ece6c8)"></div><div class="a" style="left:0;top:10px;width:143px;height:9px;background:#ab9b4b"></div><div class="a" style="left:126px;top:14px;width:70px;height:66px;border-radius:50%;background:#e4dec0"></div><div class="a" style="left:133px;top:20px;width:60px;height:54px;border-radius:50%;background:#cfc48e"></div><svg class="a" style="left:0;top:19px" width="30" height="58"><path d="M0 0H30Q8 22 6 58H0Z" fill="#e6e0c2"/><path d="M0 0H22Q4 24 3 58H0Z" fill="#c9bd84"/></svg><div class="a" style="left:0;top:76px;width:143px;height:14px;background:#ab9b4b"></div></div>
<div class="t" style="left:877.5px;top:425.2px;font-size:6.0px;letter-spacing:0;color:#111;font-weight:bold;">Student ID Card</div>
<div class="t" style="left:888.0px;top:431.7px;font-size:4.0px;letter-spacing:0;color:#222;font-weight:bold;">2020-2021</div>
<div class="t" style="left:862.0px;top:437.5px;font-size:5.4px;letter-spacing:0;color:#f4f0dc;font-weight:bold;">Registration No&nbsp;&nbsp;:&nbsp;&nbsp;S - 102123</div>
<svg class="a" style="left:833.3px;top:450.4px" width="35" height="38" viewBox="0 0 35 38"><rect x="0" y="0" width="35" height="38" fill="#e4e4e4"/><rect x="0.5" y="0.5" width="34" height="37" fill="#ffffff"/><path d="M8 33 Q5 20 8 10 Q11 2 18 2 Q25 2 28 10 Q30 20 28 33Z" fill="#4a3020"/><path d="M1 38 Q2 30 10 28 L25 28 Q33 30 34 38Z" fill="#2a70c0"/><path d="M14 24 L21 24 L22 30 L17.5 34 L13 30Z" fill="#f0c0a0"/><ellipse cx="17.8" cy="15.5" rx="7.3" ry="9.8" fill="#f0c0a0"/><path d="M10.5 14 Q11 5 18 5 Q25 5 25.5 14 Q22 7 18 7 Q14 7 10.5 14Z" fill="#4a3020"/><path d="M14.5 21 Q17.8 23 21 21" stroke="#b06050" stroke-width="0.9" fill="none"/><path d="M11.5 14h5v3.5h-5ZM19 14h5v3.5h-5Z" fill="none" stroke="#111" stroke-width="1.1"/></svg>
<svg class="a" style="left:838px;top:489.0px" width="16" height="8"><path d="M1 7 Q4 0 6 4 Q7 7 9 3 Q10 6 15 4" stroke="#333" stroke-width="0.6" fill="none"/></svg>
<div class="t" style="left:876.0px;top:451.2px;font-size:5.36px;letter-spacing:0;color:#1a1a1a;font-weight:bold;">Student Name</div>
<div class="t" style="left:916.3px;top:451.1px;font-size:5.4px;letter-spacing:0;color:#1a1a1a;font-weight:bold;">:</div>
<div class="t" style="left:920.0px;top:451.0px;font-size:5.5px;letter-spacing:0;color:#1a1a1a;font-weight:bold;">Ina Moran</div>
<div class="t" style="left:876.0px;top:462.9px;font-size:5.36px;letter-spacing:0;color:#1a1a1a;font-weight:bold;">Father's Name</div>
<div class="t" style="left:916.3px;top:462.8px;font-size:5.4px;letter-spacing:0;color:#1a1a1a;font-weight:bold;">:</div>
<div class="t" style="left:920.0px;top:462.7px;font-size:5.5px;letter-spacing:0;color:#1a1a1a;font-weight:bold;">Dahlia Moran</div>
<div class="t" style="left:876.0px;top:475.2px;font-size:5.36px;letter-spacing:0;color:#1a1a1a;font-weight:bold;">D.O.B</div>
<div class="t" style="left:916.3px;top:475.1px;font-size:5.4px;letter-spacing:0;color:#1a1a1a;font-weight:bold;">:</div>
<div class="t" style="left:920.0px;top:475.0px;font-size:5.5px;letter-spacing:0;color:#1a1a1a;font-weight:bold;">9/14/2002</div>
<div class="t" style="left:876.0px;top:486.5px;font-size:5.36px;letter-spacing:0;color:#1a1a1a;font-weight:bold;">Class</div>
<div class="t" style="left:916.3px;top:486.4px;font-size:5.4px;letter-spacing:0;color:#1a1a1a;font-weight:bold;">:</div>
<div class="t" style="left:920.0px;top:486.3px;font-size:5.5px;letter-spacing:0;color:#1a1a1a;font-weight:bold;">12-A</div>
<div class="t" style="left:858.0px;top:503.3px;font-size:6.7px;letter-spacing:0;color:#f8f4e4;font-weight:bold;">Wills Mounts State School</div>
<div class="a" style="left:998px;top:423.5px;width:143px;height:90px;border-radius:6px;overflow:hidden;background:linear-gradient(172deg,#f4f2e0 0%,#fafaf0 30%,#fbfbf5 55%,#f2f0dc 78%,#e2dcb4 100%);border:1px solid #d8d0a0"><div class="a" style="left:0;top:0;width:143px;height:13px;background:#ab9b4b"></div></div>
<div class="t" style="left:1026.6px;top:427.0px;font-size:6.7px;letter-spacing:0;color:#f8f4e4;font-weight:bold;">Wills Mounts State School</div>
<div class="t" style="left:1002.7px;top:439.7px;font-size:5.45px;letter-spacing:0;color:#222;">Department</div>
<div class="t" style="left:1034.5px;top:439.7px;font-size:5.45px;letter-spacing:0;color:#222;">:</div>
<div class="t" style="left:1038.3px;top:439.6px;font-size:5.5px;letter-spacing:0;color:#222;">Sociology</div>
<div class="t" style="left:1002.7px;top:448.4px;font-size:5.45px;letter-spacing:0;color:#222;">Phone No.</div>
<div class="t" style="left:1034.5px;top:448.4px;font-size:5.45px;letter-spacing:0;color:#222;">:</div>
<div class="t" style="left:1038.3px;top:448.3px;font-size:5.5px;letter-spacing:0;color:#222;">(145) 987-49xx</div>
<div class="t" style="left:1002.7px;top:457.1px;font-size:5.45px;letter-spacing:0;color:#222;">Add.</div>
<div class="t" style="left:1034.5px;top:457.1px;font-size:5.45px;letter-spacing:0;color:#222;">:</div>
<div class="t" style="left:1038.3px;top:457.0px;font-size:5.5px;letter-spacing:0;color:#222;">1379 Nulla. Av.Asbury Park Montana</div>
<div class="a" style="left:1018.5px;top:500.5px;width:1.6px;height:9px;background:#111"></div><div class="a" style="left:1021.1px;top:500.5px;width:1.2px;height:9px;background:#111"></div><div class="a" style="left:1023.0px;top:500.5px;width:1.6px;height:9px;background:#111"></div><div class="a" style="left:1025.3px;top:500.5px;width:1.2px;height:9px;background:#111"></div><div class="a" style="left:1027.5px;top:500.5px;width:1.2px;height:9px;background:#111"></div><div class="a" style="left:1030.1px;top:500.5px;width:1.6px;height:9px;background:#111"></div><div class="a" style="left:1033.1px;top:500.5px;width:0.8px;height:9px;background:#111"></div><div class="a" style="left:1035.3px;top:500.5px;width:0.8px;height:9px;background:#111"></div><div class="a" style="left:1037.5px;top:500.5px;width:0.8px;height:9px;background:#111"></div><div class="a" style="left:1039.3px;top:500.5px;width:1.2px;height:9px;background:#111"></div><div class="a" style="left:1041.2px;top:500.5px;width:1.2px;height:9px;background:#111"></div><div class="a" style="left:1043.1px;top:500.5px;width:0.8px;height:9px;background:#111"></div><div class="a" style="left:1045.3px;top:500.5px;width:0.8px;height:9px;background:#111"></div><div class="a" style="left:1046.8px;top:500.5px;width:1.2px;height:9px;background:#111"></div><div class="a" style="left:1049.4px;top:500.5px;width:1.6px;height:9px;background:#111"></div><div class="a" style="left:1051.7px;top:500.5px;width:0.8px;height:9px;background:#111"></div><div class="a" style="left:1053.2px;top:500.5px;width:0.8px;height:9px;background:#111"></div><div class="a" style="left:1054.7px;top:500.5px;width:1.6px;height:9px;background:#111"></div><div class="a" style="left:1057.3px;top:500.5px;width:0.8px;height:9px;background:#111"></div><div class="a" style="left:1059.5px;top:500.5px;width:1.6px;height:9px;background:#111"></div><div class="a" style="left:1061.8px;top:500.5px;width:1.2px;height:9px;background:#111"></div><div class="a" style="left:1064.4px;top:500.5px;width:0.8px;height:9px;background:#111"></div><div class="a" style="left:1066.6px;top:500.5px;width:0.8px;height:9px;background:#111"></div><div class="a" style="left:1068.8px;top:500.5px;width:0.8px;height:9px;background:#111"></div><div class="a" style="left:1071.0px;top:500.5px;width:0.8px;height:9px;background:#111"></div><div class="a" style="left:1072.8px;top:500.5px;width:1.6px;height:9px;background:#111"></div><div class="a" style="left:1075.8px;top:500.5px;width:1.6px;height:9px;background:#111"></div><div class="a" style="left:1078.4px;top:500.5px;width:1.6px;height:9px;background:#111"></div><div class="a" style="left:1081.4px;top:500.5px;width:0.8px;height:9px;background:#111"></div><div class="a" style="left:1083.6px;top:500.5px;width:0.8px;height:9px;background:#111"></div><div class="a" style="left:1085.1px;top:500.5px;width:1.2px;height:9px;background:#111"></div><div class="a" style="left:1087.3px;top:500.5px;width:1.2px;height:9px;background:#111"></div><div class="a" style="left:1089.9px;top:500.5px;width:1.6px;height:9px;background:#111"></div><div class="a" style="left:1092.9px;top:500.5px;width:1.2px;height:9px;background:#111"></div><div class="a" style="left:1094.8px;top:500.5px;width:1.2px;height:9px;background:#111"></div><div class="a" style="left:1096.7px;top:500.5px;width:1.2px;height:9px;background:#111"></div><div class="a" style="left:1098.9px;top:500.5px;width:1.2px;height:9px;background:#111"></div><div class="a" style="left:1101.5px;top:500.5px;width:0.8px;height:9px;background:#111"></div><div class="a" style="left:1103.0px;top:500.5px;width:1.6px;height:9px;background:#111"></div><div class="a" style="left:1105.6px;top:500.5px;width:0.8px;height:9px;background:#111"></div><div class="a" style="left:1107.8px;top:500.5px;width:0.8px;height:9px;background:#111"></div><div class="a" style="left:1109.3px;top:500.5px;width:1.6px;height:9px;background:#111"></div><div class="a" style="left:1111.6px;top:500.5px;width:1.6px;height:9px;background:#111"></div><div class="a" style="left:1113.9px;top:500.5px;width:0.8px;height:9px;background:#111"></div><div class="a" style="left:1116.1px;top:500.5px;width:0.8px;height:9px;background:#111"></div>
<div class="a" style="left:829px;top:539.5px;width:143px;height:90px;border-radius:6px;overflow:hidden;background:linear-gradient(160deg,#ece7c8 0%,#f8f7ec 35%,#fcfcf6 55%,#f0eed8 80%,#e4dfbc 100%);border:1px solid #d8d0a0"><div class="a" style="left:0;top:0;width:143px;height:10px;background:linear-gradient(90deg,#e6e0bc,#f2eed8 40%,#e8e2c4 70%,#ece6c8)"></div><div class="a" style="left:0;top:10px;width:143px;height:9px;background:#ab9b4b"></div><div class="a" style="left:126px;top:14px;width:70px;height:66px;border-radius:50%;background:#e4dec0"></div><div class="a" style="left:133px;top:20px;width:60px;height:54px;border-radius:50%;background:#cfc48e"></div><svg class="a" style="left:0;top:19px" width="30" height="58"><path d="M0 0H30Q8 22 6 58H0Z" fill="#e6e0c2"/><path d="M0 0H22Q4 24 3 58H0Z" fill="#c9bd84"/></svg><div class="a" style="left:0;top:76px;width:143px;height:14px;background:#ab9b4b"></div></div>
<div class="t" style="left:877.5px;top:541.2px;font-size:6.0px;letter-spacing:0;color:#111;font-weight:bold;">Student ID Card</div>
<div class="t" style="left:888.0px;top:547.7px;font-size:4.0px;letter-spacing:0;color:#222;font-weight:bold;">2020-2021</div>
<div class="t" style="left:862.0px;top:553.5px;font-size:5.4px;letter-spacing:0;color:#f4f0dc;font-weight:bold;">Registration No&nbsp;&nbsp;:&nbsp;&nbsp;S - 102124</div>
<svg class="a" style="left:833.3px;top:566.4px" width="35" height="38" viewBox="0 0 35 38"><rect x="0" y="0" width="35" height="38" fill="#e4e4e4"/><rect x="0.5" y="0.5" width="34" height="37" fill="#ffffff"/><path d="M8 33 Q5 20 8 10 Q11 2 18 2 Q25 2 28 10 Q30 20 28 33Z" fill="#1a1010"/><path d="M1 38 Q2 30 10 28 L25 28 Q33 30 34 38Z" fill="#2a2020"/><path d="M14 24 L21 24 L22 30 L17.5 34 L13 30Z" fill="#e8b898"/><ellipse cx="17.8" cy="15.5" rx="7.3" ry="9.8" fill="#e8b898"/><path d="M10.5 14 Q11 5 18 5 Q25 5 25.5 14 Q22 7 18 7 Q14 7 10.5 14Z" fill="#1a1010"/><path d="M14.5 21 Q17.8 23 21 21" stroke="#b06050" stroke-width="0.9" fill="none"/><path d="M13 15h3M19.5 15h3" stroke="#333" stroke-width="1"/></svg>
<svg class="a" style="left:838px;top:605.0px" width="16" height="8"><path d="M1 7 Q4 0 6 4 Q7 7 9 3 Q10 6 15 4" stroke="#333" stroke-width="0.6" fill="none"/></svg>
<div class="t" style="left:876.0px;top:567.2px;font-size:5.36px;letter-spacing:0;color:#1a1a1a;font-weight:bold;">Student Name</div>
<div class="t" style="left:916.3px;top:567.1px;font-size:5.4px;letter-spacing:0;color:#1a1a1a;font-weight:bold;">:</div>
<div class="t" style="left:920.0px;top:567.0px;font-size:5.5px;letter-spacing:0;color:#1a1a1a;font-weight:bold;">Hedy Greene</div>
<div class="t" style="left:876.0px;top:578.9px;font-size:5.36px;letter-spacing:0;color:#1a1a1a;font-weight:bold;">Father's Name</div>
<div class="t" style="left:916.3px;top:578.8px;font-size:5.4px;letter-spacing:0;color:#1a1a1a;font-weight:bold;">:</div>
<div class="t" style="left:920.0px;top:578.7px;font-size:5.5px;letter-spacing:0;color:#1a1a1a;font-weight:bold;">Howard Greene</div>
<div class="t" style="left:876.0px;top:591.2px;font-size:5.36px;letter-spacing:0;color:#1a1a1a;font-weight:bold;">D.O.B</div>
<div class="t" style="left:916.3px;top:591.1px;font-size:5.4px;letter-spacing:0;color:#1a1a1a;font-weight:bold;">:</div>
<div class="t" style="left:920.0px;top:591.0px;font-size:5.5px;letter-spacing:0;color:#1a1a1a;font-weight:bold;">12/15/2003</div>
<div class="t" style="left:876.0px;top:602.5px;font-size:5.36px;letter-spacing:0;color:#1a1a1a;font-weight:bold;">Class</div>
<div class="t" style="left:916.3px;top:602.4px;font-size:5.4px;letter-spacing:0;color:#1a1a1a;font-weight:bold;">:</div>
<div class="t" style="left:920.0px;top:602.3px;font-size:5.5px;letter-spacing:0;color:#1a1a1a;font-weight:bold;">12-A</div>
<div class="t" style="left:858.0px;top:619.3px;font-size:6.7px;letter-spacing:0;color:#f8f4e4;font-weight:bold;">Wills Mounts State School</div>
<div class="a" style="left:998px;top:539.5px;width:143px;height:90px;border-radius:6px;overflow:hidden;background:linear-gradient(172deg,#f4f2e0 0%,#fafaf0 30%,#fbfbf5 55%,#f2f0dc 78%,#e2dcb4 100%);border:1px solid #d8d0a0"><div class="a" style="left:0;top:0;width:143px;height:13px;background:#ab9b4b"></div></div>
<div class="t" style="left:1026.6px;top:543.0px;font-size:6.7px;letter-spacing:0;color:#f8f4e4;font-weight:bold;">Wills Mounts State School</div>
<div class="t" style="left:1002.7px;top:555.7px;font-size:5.45px;letter-spacing:0;color:#222;">Department</div>
<div class="t" style="left:1034.5px;top:555.7px;font-size:5.45px;letter-spacing:0;color:#222;">:</div>
<div class="t" style="left:1038.3px;top:555.6px;font-size:5.5px;letter-spacing:0;color:#222;">Sociology</div>
<div class="t" style="left:1002.7px;top:564.4px;font-size:5.45px;letter-spacing:0;color:#222;">Phone No.</div>
<div class="t" style="left:1034.5px;top:564.4px;font-size:5.45px;letter-spacing:0;color:#222;">:</div>
<div class="t" style="left:1038.3px;top:564.3px;font-size:5.5px;letter-spacing:0;color:#222;">(750) 558-39xx</div>
<div class="t" style="left:1002.7px;top:573.1px;font-size:5.45px;letter-spacing:0;color:#222;">Add.</div>
<div class="t" style="left:1034.5px;top:573.1px;font-size:5.45px;letter-spacing:0;color:#222;">:</div>
<div class="t" style="left:1038.3px;top:573.0px;font-size:5.5px;letter-spacing:0;color:#222;">P.O. Box 120 Odio Avenue Delaware</div>
<div class="a" style="left:1018.5px;top:616.5px;width:1.2px;height:9px;background:#111"></div><div class="a" style="left:1020.7px;top:616.5px;width:0.8px;height:9px;background:#111"></div><div class="a" style="left:1022.9px;top:616.5px;width:0.8px;height:9px;background:#111"></div><div class="a" style="left:1025.1px;top:616.5px;width:0.8px;height:9px;background:#111"></div><div class="a" style="left:1026.6px;top:616.5px;width:0.8px;height:9px;background:#111"></div><div class="a" style="left:1028.1px;top:616.5px;width:0.8px;height:9px;background:#111"></div><div class="a" style="left:1030.3px;top:616.5px;width:0.8px;height:9px;background:#111"></div><div class="a" style="left:1032.5px;top:616.5px;width:1.2px;height:9px;background:#111"></div><div class="a" style="left:1034.4px;top:616.5px;width:1.6px;height:9px;background:#111"></div><div class="a" style="left:1036.7px;top:616.5px;width:0.8px;height:9px;background:#111"></div><div class="a" style="left:1038.5px;top:616.5px;width:0.8px;height:9px;background:#111"></div><div class="a" style="left:1040.0px;top:616.5px;width:1.2px;height:9px;background:#111"></div><div class="a" style="left:1042.2px;top:616.5px;width:1.6px;height:9px;background:#111"></div><div class="a" style="left:1044.5px;top:616.5px;width:1.2px;height:9px;background:#111"></div><div class="a" style="left:1046.7px;top:616.5px;width:0.8px;height:9px;background:#111"></div><div class="a" style="left:1048.5px;top:616.5px;width:1.6px;height:9px;background:#111"></div><div class="a" style="left:1051.5px;top:616.5px;width:1.2px;height:9px;background:#111"></div><div class="a" style="left:1053.7px;top:616.5px;width:1.2px;height:9px;background:#111"></div><div class="a" style="left:1056.3px;top:616.5px;width:0.8px;height:9px;background:#111"></div><div class="a" style="left:1058.1px;top:616.5px;width:1.2px;height:9px;background:#111"></div><div class="a" style="left:1060.7px;top:616.5px;width:1.6px;height:9px;background:#111"></div><div class="a" style="left:1063.7px;top:616.5px;width:0.8px;height:9px;background:#111"></div><div class="a" style="left:1065.5px;top:616.5px;width:1.6px;height:9px;background:#111"></div><div class="a" style="left:1068.5px;top:616.5px;width:0.8px;height:9px;background:#111"></div><div class="a" style="left:1070.3px;top:616.5px;width:0.8px;height:9px;background:#111"></div><div class="a" style="left:1071.8px;top:616.5px;width:1.2px;height:9px;background:#111"></div><div class="a" style="left:1074.0px;top:616.5px;width:1.2px;height:9px;background:#111"></div><div class="a" style="left:1076.2px;top:616.5px;width:1.2px;height:9px;background:#111"></div><div class="a" style="left:1078.8px;top:616.5px;width:1.2px;height:9px;background:#111"></div><div class="a" style="left:1081.0px;top:616.5px;width:0.8px;height:9px;background:#111"></div><div class="a" style="left:1083.2px;top:616.5px;width:1.6px;height:9px;background:#111"></div><div class="a" style="left:1086.2px;top:616.5px;width:0.8px;height:9px;background:#111"></div><div class="a" style="left:1088.4px;top:616.5px;width:0.8px;height:9px;background:#111"></div><div class="a" style="left:1089.9px;top:616.5px;width:1.2px;height:9px;background:#111"></div><div class="a" style="left:1091.8px;top:616.5px;width:0.8px;height:9px;background:#111"></div><div class="a" style="left:1093.6px;top:616.5px;width:1.6px;height:9px;background:#111"></div><div class="a" style="left:1096.2px;top:616.5px;width:0.8px;height:9px;background:#111"></div><div class="a" style="left:1098.4px;top:616.5px;width:1.6px;height:9px;background:#111"></div><div class="a" style="left:1100.7px;top:616.5px;width:0.8px;height:9px;background:#111"></div><div class="a" style="left:1102.2px;top:616.5px;width:1.6px;height:9px;background:#111"></div><div class="a" style="left:1105.2px;top:616.5px;width:1.6px;height:9px;background:#111"></div><div class="a" style="left:1108.2px;top:616.5px;width:1.2px;height:9px;background:#111"></div><div class="a" style="left:1110.1px;top:616.5px;width:1.6px;height:9px;background:#111"></div><div class="a" style="left:1113.1px;top:616.5px;width:1.2px;height:9px;background:#111"></div><div class="a" style="left:1115.3px;top:616.5px;width:0.8px;height:9px;background:#111"></div>
<div class="a" style="left:793px;top:657px;width:12px;height:12px;background:#fff;border:1px solid #333"></div>
<div class="t" style="left:811.2px;top:657.3px;font-size:13.0px;letter-spacing:0;color:#000;">Fit picture to frame</div>
<div class="a" style="left:793px;top:680px;width:12px;height:12px;background:#fff;border:1px solid #333"></div>
<svg class="a" style="left:794px;top:681px" width="10" height="10"><path d="M1 5L4 8L9 1.5" stroke="#222" stroke-width="1.2" fill="none"/></svg>
<div class="t" style="left:811.2px;top:680.3px;font-size:13.1px;letter-spacing:0;color:#000;">Print all from excel file</div>
<div class="t" style="left:1022.2px;top:657.9px;font-size:12.7px;letter-spacing:0;color:#000;">Print Copies :</div>
<div class="a" style="left:1110px;top:655px;width:59px;height:19px;background:#fff;border:1px solid #7a7a7a;"></div>
<div class="t" style="left:1114.0px;top:659.9px;font-size:12.7px;letter-spacing:0;color:#000;">1</div>
<div class="a" style="left:1153px;top:657px;width:15px;height:16px;background:#f4f4f4;border-left:1px solid #d0d0d0"></div>
<div class="a" style="left:1154px;top:664px;width:14px;height:1px;background:#b0b0b0"></div>
<svg class="a" style="left:1157px;top:659px" width="8" height="4"><path d="M0 4L4 0L8 4Z" fill="#000"/></svg>
<svg class="a" style="left:1157px;top:667px" width="8" height="4"><path d="M0 0L4 4L8 0Z" fill="#000"/></svg>
<div class="t" style="left:1048.2px;top:680.8px;font-size:12.8px;letter-spacing:0;color:#000;">Enable crop mark</div>
<div class="a" style="left:1157px;top:679px;width:12px;height:12px;background:#fff;border:1px solid #333"></div>
<div class="a" style="left:879px;top:709px;width:131px;height:38px;border:2px solid #6a9ef0"></div>
<div class="a" style="left:803px;top:716px;width:73px;height:25px;background:#e1e1e1;border:1px solid #adadad;"></div>
<div class="t" style="left:825.9px;top:722.3px;font-size:13.6px;letter-spacing:0px;color:#000">Help</div>
<div class="a" style="left:886px;top:716px;width:117px;height:25px;background:#e1e1e1;border:1px solid #adadad;"></div>
<div class="t" style="left:902.2px;top:722.3px;font-size:13.6px;letter-spacing:0.4px;color:#000">Print Preview</div>
<div class="a" style="left:1013px;top:716px;width:73px;height:25px;background:#e1e1e1;border:1px solid #adadad;"></div>
<div class="t" style="left:1035.0px;top:722.3px;font-size:13.6px;letter-spacing:0.4px;color:#000">Print</div>
<div class="a" style="left:1096px;top:716px;width:73px;height:25px;background:#e1e1e1;border:1px solid #adadad;"></div>
<div class="t" style="left:1115.2px;top:722.3px;font-size:13.6px;letter-spacing:0.3px;color:#000">Close</div>
<svg class="a" style="left:930px;top:600px" width="90" height="125"><path d="M22.3 119.5L73 27" stroke="#111" stroke-width="1.3"/><path d="M77.8 19.8L68.3 25L77.5 30.8Z" fill="#111"/></svg>
<!-- watermark -->
<div class="a" style="left:893px;top:753px;width:314px;height:33px;background:#2b1828;border:1px solid #b89058;border-radius:5px"></div>
<div class="t" style="left:900px;top:756px;font-size:23.9px;color:#d9b46c;letter-spacing:0">GreetingCardsDesigner.com</div>
<div class="a" style="left:1208px;top:0;width:1px;height:788px;background:#8a8a8a"></div>
</body></html>
